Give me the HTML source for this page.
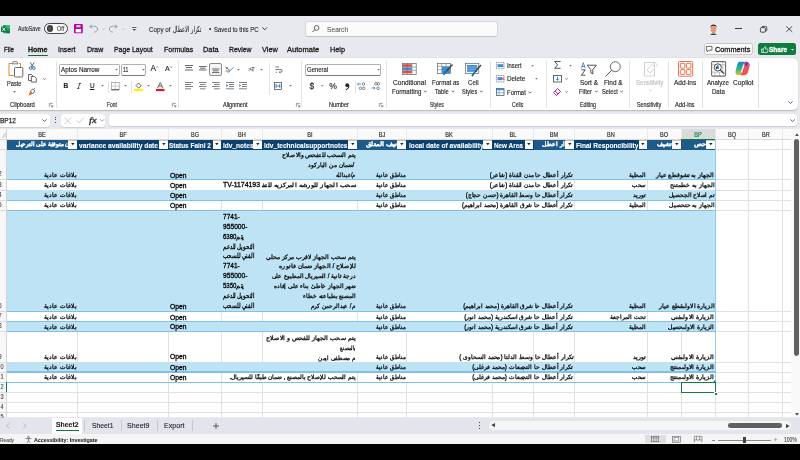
<!DOCTYPE html><html><head><meta charset="utf-8"><style>html,body{margin:0;padding:0}body{width:800px;height:460px;overflow:hidden;position:relative;background:#000;font-family:"Liberation Sans",sans-serif}#root{position:absolute;left:0;top:0;width:800px;height:460px;will-change:transform}</style></head><body><div id="root">
<div style="position:absolute;left:0.00px;top:16.00px;width:800.00px;height:428.00px;background:#e7e9ee"></div>
<svg style="position:absolute;left:1.00px;top:24.60px;overflow:visible" width="9" height="8.2" viewBox="0 0 9 8.2"><rect x="2" y="0" width="7" height="8.2" rx="0.8" fill="#21a366"/><path d="M5 0 H8.2 C8.7 0 9 0.3 9 0.8 V2.7 H5Z" fill="#33c481"/><rect x="5" y="5.5" width="4" height="2.7" fill="#107c41"/><rect x="0" y="1.4" width="5.6" height="5.6" rx="0.6" fill="#107c41"/><path d="M1.3 2.6 L4.2 5.9 M4.2 2.6 L1.3 5.9" stroke="#fff" stroke-width="0.95"/></svg>
<div style="position:absolute;left:18.00px;top:25.15px;font-size:6.80px;line-height:8.50px;color:#242424;font-weight:normal;white-space:nowrap;-webkit-text-stroke:0.1px #242424;transform:scaleX(0.7699);transform-origin:left center;">AutoSave</div>
<div style="position:absolute;left:44.40px;top:23.10px;width:23.40px;height:10.70px;border:0.9px solid #424242;border-radius:6px;box-sizing:border-box;background:#fafafa"></div>
<div style="position:absolute;left:46.80px;top:25.30px;width:6.40px;height:6.40px;background:#3d3d3d;border-radius:50%"></div>
<svg style="position:absolute;left:48.40px;top:26.90px;overflow:visible" width="3.2" height="3.2" viewBox="0 0 3.2 3.2"><circle cx="1.6" cy="1.6" r="1.1" fill="none" stroke="#8a8a8a" stroke-width="0.5"/></svg>
<div style="position:absolute;left:57.20px;top:25.02px;font-size:7.00px;line-height:8.75px;color:#333333;font-weight:normal;white-space:nowrap;-webkit-text-stroke:0.1px #333333;transform:scaleX(0.7810);transform-origin:left center;">Off</div>
<svg style="position:absolute;left:74.40px;top:23.80px;overflow:visible" width="8.8" height="9.2" viewBox="0 0 8.8 9.2"><rect x="0" y="0" width="8.8" height="9.2" rx="0.9" fill="#b4009e"/><rect x="2.2" y="1" width="4.4" height="2.4" fill="#e9b3e2"/><rect x="1.6" y="5" width="5.6" height="3.4" fill="#fff"/></svg>
<svg style="position:absolute;left:89.00px;top:24.40px;overflow:visible" width="10" height="8.5" viewBox="0 0 10 8.5"><path d="M2.6 0.6 L0.8 2.8 L3.2 4.2" fill="none" stroke="#8f8f8f" stroke-width="0.8" stroke-linejoin="round"/><path d="M1 2.8 C4 1.6 8.6 2 8.6 5 C8.6 7 7 8 5 8.2" fill="none" stroke="#8f8f8f" stroke-width="0.8"/></svg>
<svg style="position:absolute;left:101.50px;top:27.50px;overflow:visible" width="3" height="2" viewBox="0 0 3 2"><path d="M0.3 0.5 L1.5 1.6 L2.7 0.5" fill="none" stroke="#9a9a9a" stroke-width="0.6"/></svg>
<svg style="position:absolute;left:109.00px;top:24.40px;overflow:visible" width="10" height="8.5" viewBox="0 0 10 8.5"><path d="M6.4 0.6 L8.2 2.8 L5.8 4.2" fill="none" stroke="#8f8f8f" stroke-width="0.8" stroke-linejoin="round"/><path d="M8 2.8 C5 1.6 0.4 2 0.4 5 C0.4 7 2 8 4 8.2" fill="none" stroke="#8f8f8f" stroke-width="0.8"/></svg>
<svg style="position:absolute;left:121.50px;top:27.50px;overflow:visible" width="3" height="2" viewBox="0 0 3 2"><path d="M0.3 0.5 L1.5 1.6 L2.7 0.5" fill="none" stroke="#9a9a9a" stroke-width="0.6"/></svg>
<svg style="position:absolute;left:132.00px;top:26.80px;overflow:visible" width="4.5" height="4" viewBox="0 0 4.5 4"><path d="M0 0.5 H4.5" stroke="#424242" stroke-width="0.8"/><path d="M0.3 2 L2.25 3.8 L4.2 2 Z" fill="#424242"/></svg>
<div style="position:absolute;left:148.60px;top:24.61px;font-size:7.50px;line-height:9.38px;color:#242424;font-weight:normal;white-space:nowrap;-webkit-text-stroke:0.1px #242424;transform:scaleX(0.8353);transform-origin:left center;">Copy of</div>
<div dir="rtl" style="position:absolute;right:599.00px;text-align:right;top:24.61px;font-size:7.50px;line-height:9.38px;color:#242424;font-weight:normal;white-space:nowrap;-webkit-text-stroke:0.1px #242424;transform:scaleX(0.6320);transform-origin:right center;">تكرار الاعطال</div>
<div style="position:absolute;left:209.00px;top:25.24px;font-size:6.50px;line-height:8.12px;color:#242424;font-weight:normal;white-space:nowrap;-webkit-text-stroke:0.1px #242424;">&bull;</div>
<div style="position:absolute;left:214.40px;top:24.61px;font-size:7.50px;line-height:9.38px;color:#242424;font-weight:normal;white-space:nowrap;-webkit-text-stroke:0.1px #242424;transform:scaleX(0.7982);transform-origin:left center;">Saved to this PC</div>
<svg style="position:absolute;left:262.00px;top:27.30px;overflow:visible" width="5.4" height="3.4" viewBox="0 0 5.4 3.4"><path d="M0.5 0.5 L2.7 2.8 L4.9 0.5" fill="none" stroke="#242424" stroke-width="0.9"/></svg>
<div style="position:absolute;left:304.60px;top:21.20px;width:193.40px;height:15.80px;background:#fafafa;border:0.6px solid #d6d8dc;border-bottom-color:#c2c4c8;border-radius:3px;box-sizing:border-box"></div>
<svg style="position:absolute;left:312.00px;top:24.80px;overflow:visible" width="7.5" height="7.5" viewBox="0 0 7.5 7.5"><circle cx="4.6" cy="2.9" r="2.4" fill="none" stroke="#424242" stroke-width="0.8"/><path d="M2.9 4.6 L0.5 7" stroke="#424242" stroke-width="0.9"/></svg>
<div style="position:absolute;left:326.60px;top:24.60px;font-size:7.20px;line-height:9.00px;color:#616161;font-weight:normal;white-space:nowrap;-webkit-text-stroke:0.1px #616161;transform:scaleX(0.9262);transform-origin:left center;">Search</div>
<svg style="position:absolute;left:707.00px;top:22.00px;overflow:visible" width="13" height="13.3" viewBox="0 0 13 13.3"><defs><clipPath id="avc"><circle cx="6.5" cy="6.6" r="6.5"/></clipPath></defs><circle cx="6.5" cy="6.6" r="6.5" fill="#ececec"/><g clip-path="url(#avc)"><ellipse cx="6.5" cy="7" rx="2.9" ry="3.6" fill="#e29a82"/><path d="M3.2 6 C2.8 1.6 10.2 1.4 9.8 6 L9.2 4.6 C8 3.4 5 3.4 3.8 4.6 Z" fill="#262626"/><path d="M2.2 14 C2.8 10.8 10.2 10.8 10.8 14 Z" fill="#2f3b3a"/><path d="M5.3 10 H7.7 V11.3 H5.3Z" fill="#d38a73"/></g></svg>
<div style="position:absolute;left:735.40px;top:28.10px;width:6.60px;height:0.70px;background:#3a3a3a"></div>
<svg style="position:absolute;left:760.00px;top:25.60px;overflow:visible" width="7.2" height="6.5" viewBox="0 0 7.2 6.5"><rect x="0.4" y="1.6" width="5" height="4.6" rx="1" fill="none" stroke="#242424" stroke-width="0.8"/><path d="M1.8 1.4 C1.8 0.6 2.2 0.4 3 0.4 H5.6 C6.4 0.4 6.8 0.8 6.8 1.6 V4.2 C6.8 4.8 6.4 5.2 5.8 5.2" fill="none" stroke="#242424" stroke-width="0.8"/></svg>
<svg style="position:absolute;left:786.00px;top:25.60px;overflow:visible" width="6.5" height="6.2" viewBox="0 0 6.5 6.2"><path d="M0.3 0.3 L6.2 5.9 M6.2 0.3 L0.3 5.9" stroke="#242424" stroke-width="0.8"/></svg>
<div style="position:absolute;left:3.75px;top:44.66px;font-size:7.90px;line-height:9.88px;color:#1a1a1a;font-weight:normal;white-space:nowrap;-webkit-text-stroke:0.3px #1a1a1a;transform:scaleX(0.7862);transform-origin:left center;">File</div>
<div style="position:absolute;left:28.00px;top:44.66px;font-size:7.90px;line-height:9.88px;color:#1a1a1a;font-weight:bold;white-space:nowrap;-webkit-text-stroke:0.3px #1a1a1a;transform:scaleX(0.8889);transform-origin:left center;">Home</div>
<div style="position:absolute;left:58.00px;top:44.66px;font-size:7.90px;line-height:9.88px;color:#1a1a1a;font-weight:normal;white-space:nowrap;-webkit-text-stroke:0.3px #1a1a1a;transform:scaleX(0.8868);transform-origin:left center;">Insert</div>
<div style="position:absolute;left:86.75px;top:44.66px;font-size:7.90px;line-height:9.88px;color:#1a1a1a;font-weight:normal;white-space:nowrap;-webkit-text-stroke:0.3px #1a1a1a;transform:scaleX(0.8821);transform-origin:left center;">Draw</div>
<div style="position:absolute;left:113.75px;top:44.66px;font-size:7.90px;line-height:9.88px;color:#1a1a1a;font-weight:normal;white-space:nowrap;-webkit-text-stroke:0.3px #1a1a1a;transform:scaleX(0.8745);transform-origin:left center;">Page Layout</div>
<div style="position:absolute;left:163.75px;top:44.66px;font-size:7.90px;line-height:9.88px;color:#1a1a1a;font-weight:normal;white-space:nowrap;-webkit-text-stroke:0.3px #1a1a1a;transform:scaleX(0.8893);transform-origin:left center;">Formulas</div>
<div style="position:absolute;left:202.50px;top:44.66px;font-size:7.90px;line-height:9.88px;color:#1a1a1a;font-weight:normal;white-space:nowrap;-webkit-text-stroke:0.3px #1a1a1a;transform:scaleX(0.9297);transform-origin:left center;">Data</div>
<div style="position:absolute;left:228.75px;top:44.66px;font-size:7.90px;line-height:9.88px;color:#1a1a1a;font-weight:normal;white-space:nowrap;-webkit-text-stroke:0.3px #1a1a1a;transform:scaleX(0.8696);transform-origin:left center;">Review</div>
<div style="position:absolute;left:261.75px;top:44.66px;font-size:7.90px;line-height:9.88px;color:#1a1a1a;font-weight:normal;white-space:nowrap;-webkit-text-stroke:0.3px #1a1a1a;transform:scaleX(0.9282);transform-origin:left center;">View</div>
<div style="position:absolute;left:287.00px;top:44.66px;font-size:7.90px;line-height:9.88px;color:#1a1a1a;font-weight:normal;white-space:nowrap;-webkit-text-stroke:0.3px #1a1a1a;transform:scaleX(0.9547);transform-origin:left center;">Automate</div>
<div style="position:absolute;left:329.50px;top:44.66px;font-size:7.90px;line-height:9.88px;color:#1a1a1a;font-weight:normal;white-space:nowrap;-webkit-text-stroke:0.3px #1a1a1a;transform:scaleX(0.9240);transform-origin:left center;">Help</div>
<div style="position:absolute;left:28.00px;top:54.90px;width:19.60px;height:1.00px;background:#0e6b38;border-radius:0.5px"></div>
<div style="position:absolute;left:704.40px;top:42.90px;width:48.90px;height:12.40px;background:#fbfbfb;border:0.6px solid #c8c8c8;border-radius:2.5px;box-sizing:border-box"></div>
<svg style="position:absolute;left:706.20px;top:45.90px;overflow:visible" width="6.5" height="6.2" viewBox="0 0 6.5 6.2"><path d="M0.4 0.4 H6 V4.2 H2.8 L1.2 5.8 V4.2 H0.4 Z" fill="none" stroke="#242424" stroke-width="0.65" stroke-linejoin="round"/></svg>
<div style="position:absolute;left:714.80px;top:45.20px;font-size:7.20px;line-height:9.00px;color:#1a1a1a;font-weight:normal;white-space:nowrap;-webkit-text-stroke:0.3px #1a1a1a;transform:scaleX(1.0158);transform-origin:left center;">Comments</div>
<div style="position:absolute;left:758.00px;top:43.00px;width:38.00px;height:12.30px;background:#0f7b3f;border-radius:2.5px"></div>
<svg style="position:absolute;left:760.50px;top:45.60px;overflow:visible" width="7.5" height="7.5" viewBox="0 0 7.5 7.5"><path d="M0.6 6.5 V3 H2.2 V6.5 Z M2.2 3.2 L4 0.6 C4.6 0.5 5 1 4.8 1.8 L4.4 3 H6.4 C7 3 7.2 3.5 7 4 L6.3 6.5 H2.2" fill="none" stroke="#fff" stroke-width="0.7"/></svg>
<div style="position:absolute;left:769.10px;top:45.14px;font-size:7.30px;line-height:9.12px;color:#ffffff;font-weight:bold;white-space:nowrap;-webkit-text-stroke:0.3px #ffffff;transform:scaleX(0.8875);transform-origin:left center;">Share</div>
<svg style="position:absolute;left:791.00px;top:48.50px;overflow:visible" width="3" height="2" viewBox="0 0 3 2"><path d="M0 0 L1.5 1.6 L3 0Z" fill="#fff"/></svg>
<div style="position:absolute;left:0.00px;top:58.00px;width:797.80px;height:51.60px;background:#ffffff;border-radius:0 5px 5px 0;box-shadow:0 0.6px 1.2px rgba(0,0,0,0.22)"></div>
<div style="position:absolute;left:55.50px;top:61.00px;width:0.60px;height:46.50px;background:#e1e1e1"></div>
<div style="position:absolute;left:178.20px;top:61.00px;width:0.60px;height:46.50px;background:#e1e1e1"></div>
<div style="position:absolute;left:301.40px;top:61.00px;width:0.60px;height:46.50px;background:#e1e1e1"></div>
<div style="position:absolute;left:385.50px;top:61.00px;width:0.60px;height:46.50px;background:#e1e1e1"></div>
<div style="position:absolute;left:489.70px;top:61.00px;width:0.60px;height:46.50px;background:#e1e1e1"></div>
<div style="position:absolute;left:546.20px;top:61.00px;width:0.60px;height:46.50px;background:#e1e1e1"></div>
<div style="position:absolute;left:629.30px;top:61.00px;width:0.60px;height:46.50px;background:#e1e1e1"></div>
<div style="position:absolute;left:668.40px;top:61.00px;width:0.60px;height:46.50px;background:#e1e1e1"></div>
<div style="position:absolute;left:701.50px;top:61.00px;width:0.60px;height:46.50px;background:#e1e1e1"></div>
<div style="position:absolute;left:758.40px;top:61.00px;width:0.60px;height:46.50px;background:#e1e1e1"></div>
<div style="position:absolute;left:10.20px;top:100.80px;font-size:6.40px;line-height:8.00px;color:#242424;font-weight:normal;white-space:nowrap;-webkit-text-stroke:0.14px #242424;transform:scaleX(0.9065);transform-origin:left center;">Clipboard</div>
<div style="position:absolute;left:107.20px;top:100.80px;font-size:6.40px;line-height:8.00px;color:#242424;font-weight:normal;white-space:nowrap;-webkit-text-stroke:0.14px #242424;transform:scaleX(0.7658);transform-origin:left center;">Font</div>
<div style="position:absolute;left:223.00px;top:100.80px;font-size:6.40px;line-height:8.00px;color:#242424;font-weight:normal;white-space:nowrap;-webkit-text-stroke:0.14px #242424;transform:scaleX(0.8620);transform-origin:left center;">Alignment</div>
<div style="position:absolute;left:329.00px;top:100.80px;font-size:6.40px;line-height:8.00px;color:#242424;font-weight:normal;white-space:nowrap;-webkit-text-stroke:0.14px #242424;transform:scaleX(0.8753);transform-origin:left center;">Number</div>
<div style="position:absolute;left:430.30px;top:100.80px;font-size:6.40px;line-height:8.00px;color:#242424;font-weight:normal;white-space:nowrap;-webkit-text-stroke:0.14px #242424;transform:scaleX(0.7871);transform-origin:left center;">Styles</div>
<div style="position:absolute;left:512.00px;top:100.80px;font-size:6.40px;line-height:8.00px;color:#242424;font-weight:normal;white-space:nowrap;-webkit-text-stroke:0.14px #242424;transform:scaleX(0.7877);transform-origin:left center;">Cells</div>
<div style="position:absolute;left:579.90px;top:100.80px;font-size:6.40px;line-height:8.00px;color:#242424;font-weight:normal;white-space:nowrap;-webkit-text-stroke:0.14px #242424;transform:scaleX(0.8185);transform-origin:left center;">Editing</div>
<div style="position:absolute;left:637.00px;top:100.80px;font-size:6.40px;line-height:8.00px;color:#242424;font-weight:normal;white-space:nowrap;-webkit-text-stroke:0.14px #242424;transform:scaleX(0.8408);transform-origin:left center;">Sensitivity</div>
<div style="position:absolute;left:674.90px;top:100.80px;font-size:6.40px;line-height:8.00px;color:#242424;font-weight:normal;white-space:nowrap;-webkit-text-stroke:0.14px #242424;transform:scaleX(0.8998);transform-origin:left center;">Add-ins</div>
<svg style="position:absolute;left:49.00px;top:102.60px;overflow:visible" width="4.2" height="4.2" viewBox="0 0 4.2 4.2"><path d="M0.4 3.8 V0.4 H3.8" fill="none" stroke="#616161" stroke-width="0.6"/><path d="M1.5 1.5 L3.8 3.8 M3.8 2 V3.8 H2" fill="none" stroke="#616161" stroke-width="0.6"/></svg>
<svg style="position:absolute;left:171.80px;top:102.60px;overflow:visible" width="4.2" height="4.2" viewBox="0 0 4.2 4.2"><path d="M0.4 3.8 V0.4 H3.8" fill="none" stroke="#616161" stroke-width="0.6"/><path d="M1.5 1.5 L3.8 3.8 M3.8 2 V3.8 H2" fill="none" stroke="#616161" stroke-width="0.6"/></svg>
<svg style="position:absolute;left:295.50px;top:102.60px;overflow:visible" width="4.2" height="4.2" viewBox="0 0 4.2 4.2"><path d="M0.4 3.8 V0.4 H3.8" fill="none" stroke="#616161" stroke-width="0.6"/><path d="M1.5 1.5 L3.8 3.8 M3.8 2 V3.8 H2" fill="none" stroke="#616161" stroke-width="0.6"/></svg>
<svg style="position:absolute;left:378.90px;top:102.60px;overflow:visible" width="4.2" height="4.2" viewBox="0 0 4.2 4.2"><path d="M0.4 3.8 V0.4 H3.8" fill="none" stroke="#616161" stroke-width="0.6"/><path d="M1.5 1.5 L3.8 3.8 M3.8 2 V3.8 H2" fill="none" stroke="#616161" stroke-width="0.6"/></svg>
<svg style="position:absolute;left:7.80px;top:61.20px;overflow:visible" width="15.5" height="16.5" viewBox="0 0 15.5 16.5"><path d="M1 2.5 H4 M11 2.5 H12.5 V6.5" fill="none" stroke="#e8891c" stroke-width="1"/><path d="M1 2.5 V14.5 H5.5" fill="none" stroke="#e8891c" stroke-width="1"/><path d="M4 2.8 L5.2 0.6 H8.8 L10 2.8 Z" fill="none" stroke="#616161" stroke-width="0.8"/><rect x="6.5" y="6.5" width="8.3" height="9.5" rx="1" fill="#fff" stroke="#424242" stroke-width="0.8"/></svg>
<div style="position:absolute;left:6.50px;top:79.92px;font-size:7.00px;line-height:8.75px;color:#1f1f1f;font-weight:normal;white-space:nowrap;-webkit-text-stroke:0.14px #1f1f1f;transform:scaleX(0.8042);transform-origin:left center;">Paste</div>
<svg style="position:absolute;left:12.50px;top:90.50px;overflow:visible" width="3" height="2" viewBox="0 0 3 2"><path d="M0.2 0.3 L1.5 1.7 L2.8 0.3Z" fill="#424242"/></svg>
<svg style="position:absolute;left:28.70px;top:61.80px;overflow:visible" width="6.5" height="8" viewBox="0 0 6.5 8"><path d="M1.2 0.3 L4.2 5 M5.3 0.3 L2.3 5" stroke="#424242" stroke-width="0.8"/><circle cx="1.7" cy="6.2" r="1.3" fill="none" stroke="#0f6cbd" stroke-width="0.9"/><circle cx="4.8" cy="6.2" r="1.3" fill="none" stroke="#0f6cbd" stroke-width="0.9"/></svg>
<svg style="position:absolute;left:27.80px;top:74.30px;overflow:visible" width="9" height="8.5" viewBox="0 0 9 8.5"><path d="M0.5 0.5 H3.5 L4.5 1.5 V6.5 H0.5 Z" fill="#fff" stroke="#424242" stroke-width="0.8"/><path d="M3.3 2.5 H6.5 L8.3 4.3 V8.1 H3.3 Z" fill="#fff" stroke="#424242" stroke-width="0.8"/></svg>
<svg style="position:absolute;left:43.00px;top:78.20px;overflow:visible" width="3" height="2" viewBox="0 0 3 2"><path d="M0.3 0.3 L1.5 1.6 L2.7 0.3" fill="none" stroke="#424242" stroke-width="0.7"/></svg>
<svg style="position:absolute;left:28.40px;top:88.00px;overflow:visible" width="7.5" height="8" viewBox="0 0 7.5 8"><path d="M0.6 7.4 L2 3.5 L4.5 6 Z" fill="#f7630c"/><path d="M2.3 3.2 L4.8 5.7 L7 3 L4.8 1 Z" fill="none" stroke="#424242" stroke-width="0.8"/><path d="M5.5 1.5 L6.8 0.3" stroke="#424242" stroke-width="0.8"/></svg>
<div style="position:absolute;left:59.20px;top:63.60px;width:60.40px;height:12.00px;border:0.6px solid #b0b0b0;border-bottom-color:#7a7a7a;border-radius:2px;box-sizing:border-box;background:#fff"></div>
<div style="position:absolute;left:61.20px;top:66.12px;font-size:7.00px;line-height:8.75px;color:#1f1f1f;font-weight:normal;white-space:nowrap;-webkit-text-stroke:0.14px #1f1f1f;transform:scaleX(0.9055);transform-origin:left center;">Aptos Narrow</div>
<div style="position:absolute;left:120.90px;top:63.60px;width:25.40px;height:12.00px;border:0.6px solid #b0b0b0;border-bottom-color:#7a7a7a;border-radius:2px;box-sizing:border-box;background:#fff"></div>
<div style="position:absolute;left:122.80px;top:66.12px;font-size:7.00px;line-height:8.75px;color:#1f1f1f;font-weight:normal;white-space:nowrap;-webkit-text-stroke:0.14px #1f1f1f;transform:scaleX(0.7142);transform-origin:left center;">11</div>
<svg style="position:absolute;left:115.20px;top:68.60px;overflow:visible" width="3" height="2" viewBox="0 0 3 2"><path d="M0.2 0.2 L1.5 1.6 L2.8 0.2Z" fill="#424242"/></svg>
<svg style="position:absolute;left:141.80px;top:68.60px;overflow:visible" width="3" height="2" viewBox="0 0 3 2"><path d="M0.2 0.2 L1.5 1.6 L2.8 0.2Z" fill="#424242"/></svg>
<div style="position:absolute;left:150.50px;top:64.08px;font-size:8.20px;line-height:10.25px;color:#242424;font-weight:normal;white-space:nowrap;-webkit-text-stroke:0.14px #242424;">A</div>
<svg style="position:absolute;left:155.80px;top:65.80px;overflow:visible" width="2.5" height="2" viewBox="0 0 2.5 2"><path d="M0.2 1.6 L1.2 0.4 L2.2 1.6" fill="none" stroke="#0f6cbd" stroke-width="0.6"/></svg>
<div style="position:absolute;left:165.00px;top:65.42px;font-size:7.00px;line-height:8.75px;color:#242424;font-weight:normal;white-space:nowrap;-webkit-text-stroke:0.14px #242424;">A</div>
<svg style="position:absolute;left:169.60px;top:66.40px;overflow:visible" width="2.5" height="2" viewBox="0 0 2.5 2"><path d="M0.2 0.4 L1.2 1.6 L2.2 0.4" fill="none" stroke="#0f6cbd" stroke-width="0.6"/></svg>
<div style="position:absolute;left:63.60px;top:82.08px;font-size:6.60px;line-height:8.25px;color:#242424;font-weight:bold;white-space:nowrap;-webkit-text-stroke:0.14px #242424;">B</div>
<svg style="position:absolute;left:77.30px;top:83.00px;overflow:visible" width="4" height="5.8" viewBox="0 0 4 5.8"><path d="M1.6 0.4 H4 M0 5.4 H2.4 M2.8 0.4 L1.2 5.4" fill="none" stroke="#242424" stroke-width="0.75"/></svg>
<div style="position:absolute;left:89.90px;top:81.90px;font-size:6.40px;line-height:8.00px;color:#242424;font-weight:normal;white-space:nowrap;-webkit-text-stroke:0.14px #242424;text-decoration:underline">U</div>
<svg style="position:absolute;left:100.80px;top:85.40px;overflow:visible" width="3" height="2" viewBox="0 0 3 2"><path d="M0.2 0.2 L1.5 1.6 L2.8 0.2Z" fill="#424242"/></svg>
<div style="position:absolute;left:108.20px;top:81.00px;width:0.60px;height:11.50px;background:#e1e1e1"></div>
<svg style="position:absolute;left:111.00px;top:82.00px;overflow:visible" width="8.6" height="8.2" viewBox="0 0 8.6 8.2"><rect x="0.4" y="0.4" width="7.8" height="7.4" fill="none" stroke="#9a9a9a" stroke-width="0.7"/><path d="M4.3 0.4 V7.8 M0.4 4.1 H8.2" stroke="#9a9a9a" stroke-width="0.5"/><path d="M0.4 7.8 H8.2" stroke="#424242" stroke-width="0.9"/></svg>
<svg style="position:absolute;left:124.30px;top:85.40px;overflow:visible" width="3" height="2" viewBox="0 0 3 2"><path d="M0.2 0.2 L1.5 1.6 L2.8 0.2Z" fill="#424242"/></svg>
<div style="position:absolute;left:130.60px;top:81.00px;width:0.60px;height:11.50px;background:#e1e1e1"></div>
<svg style="position:absolute;left:134.00px;top:81.60px;overflow:visible" width="9" height="9.2" viewBox="0 0 9 9.2"><path d="M2 3.5 L4.5 1 L7.2 3.7 L4.7 6.2 Z" fill="none" stroke="#424242" stroke-width="0.8"/><rect x="0" y="6.9" width="9" height="2.2" fill="#fff100"/></svg>
<svg style="position:absolute;left:147.00px;top:85.40px;overflow:visible" width="3" height="2" viewBox="0 0 3 2"><path d="M0.2 0.2 L1.5 1.6 L2.8 0.2Z" fill="#424242"/></svg>
<svg style="position:absolute;left:155.50px;top:81.60px;overflow:visible" width="8.5" height="9.2" viewBox="0 0 8.5 9.2"><path d="M1.5 6 L4.25 0.6 L7 6 M2.5 4 H6" fill="none" stroke="#424242" stroke-width="0.8"/><rect x="0" y="6.9" width="8.5" height="2.2" fill="#e81123"/></svg>
<svg style="position:absolute;left:168.50px;top:85.40px;overflow:visible" width="3" height="2" viewBox="0 0 3 2"><path d="M0.2 0.2 L1.5 1.6 L2.8 0.2Z" fill="#424242"/></svg>
<svg style="position:absolute;left:184.90px;top:65.00px;overflow:visible" width="8" height="8" viewBox="0 0 8 8"><path d="M0 0.5 H8" stroke="#424242" stroke-width="0.8"/><path d="M1 2.5 H7" stroke="#424242" stroke-width="0.8"/><path d="M0 5 H8" stroke="#424242" stroke-width="0.8"/></svg>
<svg style="position:absolute;left:198.80px;top:65.00px;overflow:visible" width="7.5" height="8" viewBox="0 0 7.5 8"><path d="M0 1.5 H7.5" stroke="#424242" stroke-width="0.8"/><path d="M1 3.2 H6.5" stroke="#424242" stroke-width="0.8"/><path d="M0 5 H7.5" stroke="#424242" stroke-width="0.8"/></svg>
<div style="position:absolute;left:209.30px;top:63.20px;width:12.70px;height:12.40px;border:0.7px solid #8a8a8a;border-radius:2px;box-sizing:border-box;background:#f5f5f5"></div>
<svg style="position:absolute;left:212.00px;top:65.50px;overflow:visible" width="7.5" height="8" viewBox="0 0 7.5 8"><path d="M0 3 H7.5" stroke="#424242" stroke-width="0.8"/><path d="M1 4.8 H6.5" stroke="#424242" stroke-width="0.8"/><path d="M0 6.6 H7.5" stroke="#424242" stroke-width="0.8"/></svg>
<svg style="position:absolute;left:225.00px;top:65.50px;overflow:visible" width="9" height="7.5" viewBox="0 0 9 7.5"><path d="M0.5 1 L5 4.5 M1 3 L3 1.5 M0.5 5 H4" stroke="#424242" stroke-width="0.7"/><path d="M3 6.8 L8.3 1.5" stroke="#0f6cbd" stroke-width="0.8"/></svg>
<svg style="position:absolute;left:237.40px;top:68.60px;overflow:visible" width="3" height="2" viewBox="0 0 3 2"><path d="M0.2 0.2 L1.5 1.6 L2.8 0.2Z" fill="#424242"/></svg>
<svg style="position:absolute;left:247.80px;top:66.50px;overflow:visible" width="7" height="5" viewBox="0 0 7 5"><path d="M0.5 1 L2 2.5 L0.5 4" fill="none" stroke="#0f6cbd" stroke-width="0.8"/><path d="M4 0.5 H6.5 M5 0.5 V4.5 M3.5 0.5 C2 0.5 2 3 3.5 3 H5" fill="none" stroke="#424242" stroke-width="0.7"/></svg>
<svg style="position:absolute;left:260.20px;top:68.60px;overflow:visible" width="3" height="2" viewBox="0 0 3 2"><path d="M0.2 0.2 L1.5 1.6 L2.8 0.2Z" fill="#424242"/></svg>
<svg style="position:absolute;left:184.90px;top:81.80px;overflow:visible" width="8" height="8" viewBox="0 0 8 8"><path d="M0 0.5 H8" stroke="#616161" stroke-width="0.8"/><path d="M0 2.5 H6" stroke="#616161" stroke-width="0.8"/><path d="M0 4.5 H8" stroke="#616161" stroke-width="0.8"/><path d="M0 6.8 H6" stroke="#616161" stroke-width="0.8"/></svg>
<svg style="position:absolute;left:198.80px;top:81.80px;overflow:visible" width="7.5" height="8" viewBox="0 0 7.5 8"><path d="M0 0.5 H7.5" stroke="#616161" stroke-width="0.8"/><path d="M1 2.5 H6.5" stroke="#616161" stroke-width="0.8"/><path d="M0 4.5 H7.5" stroke="#616161" stroke-width="0.8"/><path d="M1 6.8 H6.5" stroke="#616161" stroke-width="0.8"/></svg>
<svg style="position:absolute;left:212.00px;top:81.80px;overflow:visible" width="7.7" height="8" viewBox="0 0 7.7 8"><path d="M0 0.5 H7.7" stroke="#616161" stroke-width="0.8"/><path d="M2 2.5 H7.7" stroke="#616161" stroke-width="0.8"/><path d="M0 4.5 H7.7" stroke="#616161" stroke-width="0.8"/><path d="M2 6.8 H7.7" stroke="#616161" stroke-width="0.8"/></svg>
<svg style="position:absolute;left:225.60px;top:81.80px;overflow:visible" width="8" height="8" viewBox="0 0 8 8"><path d="M0 0.5 H8 M3 2.5 H8 M3 4.5 H8 M0 6.8 H8" stroke="#616161" stroke-width="0.8"/><path d="M2.2 3.5 L0.3 2.3 V4.7Z" fill="#0f6cbd"/></svg>
<svg style="position:absolute;left:239.00px;top:81.80px;overflow:visible" width="8" height="8" viewBox="0 0 8 8"><path d="M0 0.5 H8 M3 2.5 H8 M3 4.5 H8 M0 6.8 H8" stroke="#616161" stroke-width="0.8"/><path d="M0.3 2.3 L2.2 3.5 L0.3 4.7Z" fill="#0f6cbd"/></svg>
<div style="position:absolute;left:268.50px;top:62.50px;width:0.60px;height:32.50px;background:#e1e1e1"></div>
<svg style="position:absolute;left:275.00px;top:66.20px;overflow:visible" width="8" height="7" viewBox="0 0 8 7"><path d="M0.5 1 H4 M0.5 3.5 H6 C7.5 3.5 7.5 6.2 6 6.2 H4.5 M0.5 6.2 H2" fill="none" stroke="#424242" stroke-width="0.7"/><path d="M5.3 5.2 L4.2 6.2 L5.3 7.2" fill="none" stroke="#0f6cbd" stroke-width="0.7"/></svg>
<svg style="position:absolute;left:274.20px;top:81.80px;overflow:visible" width="7.8" height="8" viewBox="0 0 7.8 8"><rect x="0.4" y="0.4" width="7" height="7.2" fill="none" stroke="#424242" stroke-width="0.7"/><path d="M2 2 V6 M5.8 2 V6" stroke="#0f6cbd" stroke-width="0.8"/><path d="M1.8 4 H6" stroke="#0f6cbd" stroke-width="0.8"/></svg>
<svg style="position:absolute;left:289.00px;top:85.40px;overflow:visible" width="3" height="2" viewBox="0 0 3 2"><path d="M0.2 0.2 L1.5 1.6 L2.8 0.2Z" fill="#424242"/></svg>
<div style="position:absolute;left:305.20px;top:63.60px;width:76.30px;height:12.00px;border:0.6px solid #b0b0b0;border-bottom-color:#7a7a7a;border-radius:2px;box-sizing:border-box;background:#fff"></div>
<div style="position:absolute;left:306.80px;top:66.12px;font-size:7.00px;line-height:8.75px;color:#1f1f1f;font-weight:normal;white-space:nowrap;-webkit-text-stroke:0.14px #1f1f1f;transform:scaleX(0.8512);transform-origin:left center;">General</div>
<svg style="position:absolute;left:376.70px;top:68.60px;overflow:visible" width="3" height="2" viewBox="0 0 3 2"><path d="M0.2 0.2 L1.5 1.6 L2.8 0.2Z" fill="#424242"/></svg>
<div style="position:absolute;left:309.40px;top:81.35px;font-size:8.40px;line-height:10.50px;color:#242424;font-weight:normal;white-space:nowrap;-webkit-text-stroke:0.14px #242424;">$</div>
<svg style="position:absolute;left:321.00px;top:85.40px;overflow:visible" width="2.5" height="2" viewBox="0 0 2.5 2"><path d="M0.2 0.2 L1.25 1.4 L2.3 0.2Z" fill="#424242"/></svg>
<div style="position:absolute;left:329.30px;top:80.62px;font-size:8.60px;line-height:10.75px;color:#242424;font-weight:normal;white-space:nowrap;-webkit-text-stroke:0.14px #242424;">%</div>
<svg style="position:absolute;left:345.30px;top:82.80px;overflow:visible" width="4.5" height="7" viewBox="0 0 4.5 7"><circle cx="2.2" cy="2.2" r="1.9" fill="#242424"/><path d="M3.9 2.4 C4 4.5 2.8 6 0.8 6.8" fill="none" stroke="#242424" stroke-width="1.1"/></svg>
<div style="position:absolute;left:354.60px;top:81.00px;width:0.60px;height:11.50px;background:#e1e1e1"></div>
<svg style="position:absolute;left:357.40px;top:81.80px;overflow:visible" width="8.5" height="8" viewBox="0 0 8.5 8"><path d="M0.5 2 H4 M1.8 0.8 L0.5 2 L1.8 3.2" fill="none" stroke="#0f6cbd" stroke-width="0.7"/><circle cx="6.5" cy="2" r="1.3" fill="none" stroke="#424242" stroke-width="0.6"/><circle cx="3.5" cy="6.3" r="1.3" fill="none" stroke="#424242" stroke-width="0.6"/><circle cx="6.8" cy="6.3" r="1.3" fill="none" stroke="#424242" stroke-width="0.6"/></svg>
<svg style="position:absolute;left:371.00px;top:81.80px;overflow:visible" width="8.5" height="8" viewBox="0 0 8.5 8"><path d="M0.5 6 H4 M2.7 4.8 L4 6 L2.7 7.2" fill="none" stroke="#0f6cbd" stroke-width="0.7"/><circle cx="5" cy="1.8" r="1.3" fill="none" stroke="#424242" stroke-width="0.6"/><circle cx="7.5" cy="1.8" r="1.3" fill="none" stroke="#424242" stroke-width="0.6"/><circle cx="7" cy="6.3" r="1.3" fill="none" stroke="#424242" stroke-width="0.6"/></svg>
<svg style="position:absolute;left:402.00px;top:63.20px;overflow:visible" width="14.6" height="11.8" viewBox="0 0 14.6 11.8"><rect x="0.4" y="0.4" width="13.8" height="11" fill="#fff" stroke="#616161" stroke-width="0.7"/><rect x="0.8" y="1.2" width="9" height="2.6" fill="#e8484a"/><rect x="0.8" y="4.5" width="9" height="2.6" fill="#3b8ed8"/><rect x="0.8" y="7.8" width="9" height="2.6" fill="#e8484a"/><path d="M0.4 4.1 H14.2 M0.4 7.4 H14.2 M5 0.4 V11.4 M10 0.4 V11.4" stroke="#616161" stroke-width="0.5"/></svg>
<div style="position:absolute;left:393.10px;top:78.83px;font-size:7.00px;line-height:8.75px;color:#1f1f1f;font-weight:normal;white-space:nowrap;-webkit-text-stroke:0.14px #1f1f1f;transform:scaleX(0.9392);transform-origin:left center;">Conditional</div>
<div style="position:absolute;left:391.60px;top:88.12px;font-size:7.00px;line-height:8.75px;color:#1f1f1f;font-weight:normal;white-space:nowrap;-webkit-text-stroke:0.14px #1f1f1f;transform:scaleX(0.8761);transform-origin:left center;">Formatting <svg width='4' height='3' style='vertical-align:1px;margin-left:1px' viewBox='0 0 4 3'><path d='M0.4 0.6 L2 2.2 L3.6 0.6' fill='none' stroke='#424242' stroke-width='0.8'/></svg></div>
<svg style="position:absolute;left:436.80px;top:63.20px;overflow:visible" width="16.5" height="12.5" viewBox="0 0 16.5 12.5"><rect x="0.4" y="0.4" width="13" height="10" fill="#fff" stroke="#616161" stroke-width="0.7"/><path d="M0.4 3.3 H13.4 M0.4 6.6 H13.4 M4.7 0.4 V10.4 M9 0.4 V10.4" stroke="#616161" stroke-width="0.5"/><rect x="5" y="3.6" width="8" height="6.5" fill="#3b8ed8"/><path d="M15.5 1.5 L9 8.5" stroke="#424242" stroke-width="1.4"/><path d="M9 8.5 L6.6 11.8 L8.2 9" stroke="#0f6cbd" stroke-width="1.6"/></svg>
<div style="position:absolute;left:431.60px;top:78.83px;font-size:7.00px;line-height:8.75px;color:#1f1f1f;font-weight:normal;white-space:nowrap;-webkit-text-stroke:0.14px #1f1f1f;transform:scaleX(0.8694);transform-origin:left center;">Format as</div>
<div style="position:absolute;left:435.00px;top:88.12px;font-size:7.00px;line-height:8.75px;color:#1f1f1f;font-weight:normal;white-space:nowrap;-webkit-text-stroke:0.14px #1f1f1f;transform:scaleX(0.8190);transform-origin:left center;">Table <svg width='4' height='3' style='vertical-align:1px;margin-left:1px' viewBox='0 0 4 3'><path d='M0.4 0.6 L2 2.2 L3.6 0.6' fill='none' stroke='#424242' stroke-width='0.8'/></svg></div>
<svg style="position:absolute;left:465.20px;top:63.20px;overflow:visible" width="16.5" height="13.7" viewBox="0 0 16.5 13.7"><rect x="0.4" y="0.4" width="13.4" height="10" fill="#fff" stroke="#616161" stroke-width="0.7"/><rect x="2" y="2" width="10.3" height="6.8" fill="#3b8ed8"/><path d="M2 4.2 H12.3 M2 6.4 H12.3" stroke="#9fcbf0" stroke-width="0.6"/><path d="M16 2 L10 9" stroke="#424242" stroke-width="1.4"/><path d="M10 9 L7 13.2 L9 9.8" stroke="#0f6cbd" stroke-width="1.6"/></svg>
<div style="position:absolute;left:467.80px;top:78.83px;font-size:7.00px;line-height:8.75px;color:#1f1f1f;font-weight:normal;white-space:nowrap;-webkit-text-stroke:0.14px #1f1f1f;transform:scaleX(0.8705);transform-origin:left center;">Cell</div>
<div style="position:absolute;left:462.30px;top:88.12px;font-size:7.00px;line-height:8.75px;color:#1f1f1f;font-weight:normal;white-space:nowrap;-webkit-text-stroke:0.14px #1f1f1f;transform:scaleX(0.8034);transform-origin:left center;">Styles <svg width='4' height='3' style='vertical-align:1px;margin-left:1px' viewBox='0 0 4 3'><path d='M0.4 0.6 L2 2.2 L3.6 0.6' fill='none' stroke='#424242' stroke-width='0.8'/></svg></div>
<svg style="position:absolute;left:495.90px;top:61.90px;overflow:visible" width="8.5" height="7.2" viewBox="0 0 8.5 7.2"><rect x="0.4" y="0.4" width="7.6" height="6.4" fill="none" stroke="#424242" stroke-width="0.6" stroke-dasharray="1 0.6"/><rect x="1.5" y="2.2" width="5.8" height="3" fill="#3b8ed8"/></svg>
<div style="position:absolute;left:506.70px;top:61.53px;font-size:7.00px;line-height:8.75px;color:#1f1f1f;font-weight:normal;white-space:nowrap;-webkit-text-stroke:0.14px #1f1f1f;transform:scaleX(0.8335);transform-origin:left center;">Insert</div>
<svg style="position:absolute;left:531.00px;top:64.50px;overflow:visible" width="3" height="2" viewBox="0 0 3 2"><path d="M0.2 0.2 L1.5 1.6 L2.8 0.2Z" fill="#424242"/></svg>
<svg style="position:absolute;left:495.90px;top:75.30px;overflow:visible" width="8.5" height="7.4" viewBox="0 0 8.5 7.4"><rect x="0.4" y="0.4" width="7.6" height="6.6" fill="none" stroke="#424242" stroke-width="0.6" stroke-dasharray="1 0.6"/><rect x="1.5" y="2.2" width="4.5" height="3" fill="#3b8ed8"/><path d="M5.8 2.5 L8 4.8 M8 2.5 L5.8 4.8" stroke="#e81123" stroke-width="0.8"/></svg>
<div style="position:absolute;left:506.70px;top:75.42px;font-size:7.00px;line-height:8.75px;color:#1f1f1f;font-weight:normal;white-space:nowrap;-webkit-text-stroke:0.14px #1f1f1f;transform:scaleX(0.9044);transform-origin:left center;">Delete</div>
<svg style="position:absolute;left:535.00px;top:78.30px;overflow:visible" width="3" height="2" viewBox="0 0 3 2"><path d="M0.2 0.2 L1.5 1.6 L2.8 0.2Z" fill="#424242"/></svg>
<svg style="position:absolute;left:495.90px;top:88.30px;overflow:visible" width="8.5" height="8" viewBox="0 0 8.5 8"><rect x="0.4" y="0.4" width="7.6" height="7.2" fill="none" stroke="#424242" stroke-width="0.7"/><rect x="0.4" y="0.4" width="7.6" height="1.8" fill="#3b8ed8"/><path d="M3 2.2 V7.6 M0.4 4.8 H8" stroke="#3b8ed8" stroke-width="0.6"/></svg>
<div style="position:absolute;left:506.70px;top:88.72px;font-size:7.00px;line-height:8.75px;color:#1f1f1f;font-weight:normal;white-space:nowrap;-webkit-text-stroke:0.14px #1f1f1f;transform:scaleX(0.8481);transform-origin:left center;">Format <svg width='4' height='3' style='vertical-align:1px;margin-left:1px' viewBox='0 0 4 3'><path d='M0.4 0.6 L2 2.2 L3.6 0.6' fill='none' stroke='#424242' stroke-width='0.8'/></svg></div>
<svg style="position:absolute;left:554.20px;top:61.30px;overflow:visible" width="7" height="7.8" viewBox="0 0 7 7.8"><path d="M6.6 0.5 H0.6 L3.6 3.9 L0.6 7.3 H6.6" fill="none" stroke="#242424" stroke-width="0.8"/></svg>
<svg style="position:absolute;left:569.00px;top:64.50px;overflow:visible" width="3" height="2" viewBox="0 0 3 2"><path d="M0.2 0.2 L1.5 1.6 L2.8 0.2Z" fill="#424242"/></svg>
<svg style="position:absolute;left:552.90px;top:75.30px;overflow:visible" width="9" height="7.4" viewBox="0 0 9 7.4"><rect x="0.4" y="0.4" width="8.2" height="6.6" fill="none" stroke="#424242" stroke-width="0.8"/><path d="M4.5 1.8 V5.2 M3 3.8 L4.5 5.3 L6 3.8" fill="none" stroke="#0f6cbd" stroke-width="0.8"/></svg>
<svg style="position:absolute;left:565.20px;top:78.30px;overflow:visible" width="3" height="2" viewBox="0 0 3 2"><path d="M0.3 0.3 L1.5 1.6 L2.7 0.3" fill="none" stroke="#424242" stroke-width="0.6"/></svg>
<svg style="position:absolute;left:553.10px;top:88.00px;overflow:visible" width="8" height="7.8" viewBox="0 0 8 7.8"><path d="M0.5 4.5 L4.5 0.5 L7.5 3.5 L3.5 7.5 Z" fill="none" stroke="#b4009e" stroke-width="0.9"/><path d="M2 3 L5 6" stroke="#b4009e" stroke-width="0.9"/></svg>
<svg style="position:absolute;left:565.20px;top:91.30px;overflow:visible" width="3" height="2" viewBox="0 0 3 2"><path d="M0.3 0.3 L1.5 1.6 L2.7 0.3" fill="none" stroke="#424242" stroke-width="0.6"/></svg>
<svg style="position:absolute;left:580.50px;top:62.30px;overflow:visible" width="16" height="14" viewBox="0 0 16 14"><path d="M0.4 6.3 L2.3 0.6 L4.2 6.3 M1 4.5 H3.6" fill="none" stroke="#0f6cbd" stroke-width="0.75"/><path d="M0.5 7.8 H4.2 L0.5 13.2 H4.4" fill="none" stroke="#242424" stroke-width="0.8"/><path d="M6.2 3.2 H15.4 L11.8 7.6 V12 L9.8 10.8 V7.6 Z" fill="none" stroke="#242424" stroke-width="0.8"/></svg>
<div style="position:absolute;left:579.50px;top:78.83px;font-size:7.00px;line-height:8.75px;color:#1f1f1f;font-weight:normal;white-space:nowrap;-webkit-text-stroke:0.14px #1f1f1f;transform:scaleX(0.9253);transform-origin:left center;">Sort &amp;</div>
<div style="position:absolute;left:579.00px;top:88.12px;font-size:7.00px;line-height:8.75px;color:#1f1f1f;font-weight:normal;white-space:nowrap;-webkit-text-stroke:0.14px #1f1f1f;transform:scaleX(0.8311);transform-origin:left center;">Filter <svg width='4' height='3' style='vertical-align:1px;margin-left:1px' viewBox='0 0 4 3'><path d='M0.4 0.6 L2 2.2 L3.6 0.6' fill='none' stroke='#424242' stroke-width='0.8'/></svg></div>
<svg style="position:absolute;left:605.30px;top:61.20px;overflow:visible" width="16" height="16" viewBox="0 0 16 16"><circle cx="10.3" cy="5.7" r="5" fill="none" stroke="#424242" stroke-width="0.8"/><path d="M6.7 9.3 L0.6 15.4" stroke="#424242" stroke-width="0.9"/></svg>
<div style="position:absolute;left:603.70px;top:78.83px;font-size:7.00px;line-height:8.75px;color:#1f1f1f;font-weight:normal;white-space:nowrap;-webkit-text-stroke:0.14px #1f1f1f;transform:scaleX(0.9143);transform-origin:left center;">Find &amp;</div>
<div style="position:absolute;left:602.00px;top:88.12px;font-size:7.00px;line-height:8.75px;color:#1f1f1f;font-weight:normal;white-space:nowrap;-webkit-text-stroke:0.14px #1f1f1f;transform:scaleX(0.8142);transform-origin:left center;">Select <svg width='4' height='3' style='vertical-align:1px;margin-left:1px' viewBox='0 0 4 3'><path d='M0.4 0.6 L2 2.2 L3.6 0.6' fill='none' stroke='#424242' stroke-width='0.8'/></svg></div>
<svg style="position:absolute;left:643.60px;top:61.20px;overflow:visible" width="14.5" height="15.8" viewBox="0 0 14.5 15.8"><rect x="0.5" y="1.5" width="10" height="13.5" fill="none" stroke="#c8c8c8" stroke-width="0.8"/><path d="M3 9 L8 3.5 L11 6.5 L6 12 Z" fill="#fff" stroke="#c8c8c8" stroke-width="0.8"/><path d="M9 2.5 L10.5 1 L13.5 4 L12 5.5" fill="none" stroke="#c8c8c8" stroke-width="0.8"/></svg>
<div style="position:absolute;left:635.80px;top:79.08px;font-size:6.60px;line-height:8.25px;color:#bdbdbd;font-weight:normal;white-space:nowrap;-webkit-text-stroke:0.14px #bdbdbd;transform:scaleX(0.9229);transform-origin:left center;">Sensitivity</div>
<svg style="position:absolute;left:648.50px;top:90.00px;overflow:visible" width="3" height="2" viewBox="0 0 3 2"><path d="M0.2 0.2 L1.5 1.6 L2.8 0.2Z" fill="#c0c0c0"/></svg>
<svg style="position:absolute;left:677.90px;top:61.20px;overflow:visible" width="15.2" height="15.7" viewBox="0 0 15.2 15.7"><rect x="0.5" y="0.5" width="14.2" height="14.7" rx="1" fill="none" stroke="#e8643c" stroke-width="0.9"/><rect x="2.3" y="2.3" width="4.5" height="4.8" rx="0.7" fill="none" stroke="#e8643c" stroke-width="0.9"/><rect x="8.4" y="2.3" width="4.5" height="4.8" rx="0.7" fill="none" stroke="#e8643c" stroke-width="0.9"/><rect x="2.3" y="8.6" width="4.5" height="4.8" rx="0.7" fill="none" stroke="#e8643c" stroke-width="0.9"/><rect x="8.4" y="8.6" width="4.5" height="4.8" rx="0.7" fill="none" stroke="#e8643c" stroke-width="0.9"/></svg>
<div style="position:absolute;left:674.20px;top:78.83px;font-size:7.00px;line-height:8.75px;color:#1f1f1f;font-weight:normal;white-space:nowrap;-webkit-text-stroke:0.14px #1f1f1f;transform:scaleX(0.9354);transform-origin:left center;">Add-ins</div>
<svg style="position:absolute;left:710.70px;top:61.20px;overflow:visible" width="15.2" height="15.7" viewBox="0 0 15.2 15.7"><rect x="0.6" y="0.6" width="14" height="14.5" rx="1" fill="#fff" stroke="#6a6a6a" stroke-width="1.1"/><path d="M0.6 3.8 H14.6 M0.6 11.2 H14.6 M4 11.2 V15.1 M8.5 11.2 V15.1 M11.8 0.6 V11.2" stroke="#9a9a9a" stroke-width="0.6"/><circle cx="6.8" cy="6.4" r="3.6" fill="#fff" stroke="#3a3a3a" stroke-width="0.9"/><path d="M9.4 9 L13.2 12.8" stroke="#3a3a3a" stroke-width="1.1"/><rect x="6.1" y="4.4" width="1.6" height="3.6" fill="#0f6cbd"/><rect x="4.8" y="5.6" width="1.2" height="2.4" fill="#3a3a3a"/></svg>
<div style="position:absolute;left:707.20px;top:78.83px;font-size:7.00px;line-height:8.75px;color:#1f1f1f;font-weight:normal;white-space:nowrap;-webkit-text-stroke:0.14px #1f1f1f;transform:scaleX(0.8753);transform-origin:left center;">Analyze</div>
<div style="position:absolute;left:712.00px;top:88.12px;font-size:7.00px;line-height:8.75px;color:#1f1f1f;font-weight:normal;white-space:nowrap;-webkit-text-stroke:0.14px #1f1f1f;transform:scaleX(0.8650);transform-origin:left center;">Data</div>
<svg style="position:absolute;left:735.00px;top:61.30px;overflow:visible" width="15.2" height="15" viewBox="0 0 15.2 15"><defs><linearGradient id="cpA" x1="0" y1="0" x2="0" y2="1"><stop offset="0" stop-color="#1b7fd6"/><stop offset="0.5" stop-color="#27b58f"/><stop offset="1" stop-color="#f6b726"/></linearGradient><linearGradient id="cpB" x1="0" y1="0" x2="0.3" y2="1"><stop offset="0" stop-color="#7b3fe0"/><stop offset="0.45" stop-color="#e8498a"/><stop offset="1" stop-color="#f4573c"/></linearGradient><clipPath id="cpL"><path d="M0 0 H9.5 L5.5 15 H0Z"/></clipPath><clipPath id="cpR"><path d="M9.5 0 H16 V15 H5.5Z"/></clipPath></defs><path id="cpS" d="M4 0.8 H11.2 C13.4 0.8 15.2 2.6 14.7 4.8 L13.2 10.8 C12.7 12.9 11 14.3 9 14.3 H3.8 C1.6 14.3 0 12.6 0.5 10.4 L2 4.4 C2.5 2.3 3.8 0.8 4 0.8Z" fill="url(#cpA)" clip-path="url(#cpL)"/><path d="M4 0.8 H11.2 C13.4 0.8 15.2 2.6 14.7 4.8 L13.2 10.8 C12.7 12.9 11 14.3 9 14.3 H3.8 C1.6 14.3 0 12.6 0.5 10.4 L2 4.4 C2.5 2.3 3.8 0.8 4 0.8Z" fill="url(#cpB)" clip-path="url(#cpR)"/><path d="M11.5 0.8 C12.5 1 13 1.8 12.6 3 L11.8 5 H9.8Z" fill="#15407a" opacity="0.7"/><path d="M9 3.6 L6.3 11.6" stroke="#fff" stroke-width="1.3"/></svg>
<div style="position:absolute;left:732.60px;top:78.83px;font-size:7.00px;line-height:8.75px;color:#1f1f1f;font-weight:normal;white-space:nowrap;-webkit-text-stroke:0.14px #1f1f1f;transform:scaleX(0.9451);transform-origin:left center;">Copilot</div>
<svg style="position:absolute;left:788.00px;top:101.00px;overflow:visible" width="5" height="3" viewBox="0 0 5 3"><path d="M0.4 0.4 L2.5 2.5 L4.6 0.4" fill="none" stroke="#424242" stroke-width="0.8"/></svg>
<div style="position:absolute;left:0.00px;top:114.00px;width:50.00px;height:12.50px;background:#fff;border-radius:0 3px 3px 0;box-shadow:0 0.5px 0.8px rgba(0,0,0,0.12)"></div>
<div style="position:absolute;left:-0.30px;top:115.62px;font-size:7.80px;line-height:9.75px;color:#242424;font-weight:normal;white-space:nowrap;-webkit-text-stroke:0.1px #242424;transform:scaleX(0.8334);transform-origin:left center;-webkit-text-stroke:0.25px #242424">BP12</div>
<svg style="position:absolute;left:41.90px;top:118.80px;overflow:visible" width="5" height="3" viewBox="0 0 5 3"><path d="M0.4 0.4 L2.5 2.5 L4.6 0.4" fill="none" stroke="#424242" stroke-width="0.8"/></svg>
<div style="position:absolute;left:54.50px;top:116.90px;width:1.10px;height:1.00px;background:#424242"></div>
<div style="position:absolute;left:54.50px;top:119.40px;width:1.10px;height:1.00px;background:#424242"></div>
<div style="position:absolute;left:54.50px;top:121.90px;width:1.10px;height:1.00px;background:#424242"></div>
<div style="position:absolute;left:61.20px;top:114.00px;width:43.80px;height:12.50px;background:#fff;border-radius:3px;box-shadow:0 0.5px 0.8px rgba(0,0,0,0.12)"></div>
<svg style="position:absolute;left:63.80px;top:116.50px;overflow:visible" width="7.5" height="7.5" viewBox="0 0 7.5 7.5"><path d="M0.5 0.5 L7 7 M7 0.5 L0.5 7" stroke="#b5b5b5" stroke-width="0.7"/></svg>
<svg style="position:absolute;left:75.60px;top:116.80px;overflow:visible" width="8" height="6.5" viewBox="0 0 8 6.5"><path d="M0.5 3.5 L3 6 L7.8 0.5" fill="none" stroke="#b5b5b5" stroke-width="0.7"/></svg>
<div style="position:absolute;left:89.20px;top:114.97px;font-size:9.00px;line-height:11.25px;color:#242424;font-weight:normal;white-space:nowrap;-webkit-text-stroke:0.1px #242424;transform:scaleX(1.1692);transform-origin:left center;font-style:italic;font-family:'Liberation Serif',serif;-webkit-text-stroke:0.3px #242424">fx</div>
<svg style="position:absolute;left:99.80px;top:119.00px;overflow:visible" width="4.4" height="2.6" viewBox="0 0 4.4 2.6"><path d="M0.3 0.3 L2.2 2.2 L4.1 0.3" fill="none" stroke="#7a7a7a" stroke-width="0.65"/></svg>
<div style="position:absolute;left:108.80px;top:114.00px;width:688.60px;height:12.20px;background:#fff;border-radius:3px;box-shadow:0 0.5px 0.8px rgba(0,0,0,0.12)"></div>
<svg style="position:absolute;left:790.40px;top:118.60px;overflow:visible" width="5.3" height="3" viewBox="0 0 5.3 3"><path d="M0.4 0.4 L2.65 2.5 L4.9 0.4" fill="none" stroke="#424242" stroke-width="0.8"/></svg>
<div style="position:absolute;left:0.00px;top:129.00px;width:800.00px;height:288.00px;background:#ffffff"></div>
<div style="position:absolute;left:0.00px;top:129.00px;width:791.30px;height:10.30px;background:#fafafa"></div>
<div style="position:absolute;left:0.00px;top:139.00px;width:791.30px;height:0.60px;background:#d9d9d9"></div>
<svg style="position:absolute;left:0.50px;top:131.00px;overflow:visible" width="5" height="7" viewBox="0 0 5 7"><path d="M5 0.5 V6.5 H0" fill="#dcdcdc"/></svg>
<div style="position:absolute;left:0.00px;top:139.60px;width:6.50px;height:277.40px;background:#f7f7f7"></div>
<div style="position:absolute;left:6.10px;top:129.00px;width:0.60px;height:288.00px;background:#d4d4d4"></div>
<div style="position:absolute;left:681.00px;top:129.00px;width:34.00px;height:10.30px;background:#dadada"></div>
<div style="position:absolute;left:681.00px;top:138.50px;width:34.00px;height:1.10px;background:#107c41"></div>
<div style="position:absolute;left:76.70px;top:129.00px;width:0.60px;height:10.00px;background:#e9e9e9"></div>
<div style="position:absolute;left:-158.25px;width:400px;text-align:center;top:131.03px;font-size:7.00px;line-height:8.75px;color:#262626;font-weight:normal;white-space:nowrap;-webkit-text-stroke:0.1px #262626;transform:scaleX(0.8);-webkit-text-stroke:0.15px currentColor">BE</div>
<div style="position:absolute;left:167.70px;top:129.00px;width:0.60px;height:10.00px;background:#e9e9e9"></div>
<div style="position:absolute;left:-77.50px;width:400px;text-align:center;top:131.03px;font-size:7.00px;line-height:8.75px;color:#262626;font-weight:normal;white-space:nowrap;-webkit-text-stroke:0.1px #262626;transform:scaleX(0.8);-webkit-text-stroke:0.15px currentColor">BF</div>
<div style="position:absolute;left:221.20px;top:129.00px;width:0.60px;height:10.00px;background:#e9e9e9"></div>
<div style="position:absolute;left:-5.25px;width:400px;text-align:center;top:131.03px;font-size:7.00px;line-height:8.75px;color:#262626;font-weight:normal;white-space:nowrap;-webkit-text-stroke:0.1px #262626;transform:scaleX(0.8);-webkit-text-stroke:0.15px currentColor">BG</div>
<div style="position:absolute;left:261.70px;top:129.00px;width:0.60px;height:10.00px;background:#e9e9e9"></div>
<div style="position:absolute;left:41.75px;width:400px;text-align:center;top:131.03px;font-size:7.00px;line-height:8.75px;color:#262626;font-weight:normal;white-space:nowrap;-webkit-text-stroke:0.1px #262626;transform:scaleX(0.8);-webkit-text-stroke:0.15px currentColor">BH</div>
<div style="position:absolute;left:356.70px;top:129.00px;width:0.60px;height:10.00px;background:#e9e9e9"></div>
<div style="position:absolute;left:109.50px;width:400px;text-align:center;top:131.03px;font-size:7.00px;line-height:8.75px;color:#262626;font-weight:normal;white-space:nowrap;-webkit-text-stroke:0.1px #262626;transform:scaleX(0.8);-webkit-text-stroke:0.15px currentColor">BI</div>
<div style="position:absolute;left:405.70px;top:129.00px;width:0.60px;height:10.00px;background:#e9e9e9"></div>
<div style="position:absolute;left:181.50px;width:400px;text-align:center;top:131.03px;font-size:7.00px;line-height:8.75px;color:#262626;font-weight:normal;white-space:nowrap;-webkit-text-stroke:0.1px #262626;transform:scaleX(0.8);-webkit-text-stroke:0.15px currentColor">BJ</div>
<div style="position:absolute;left:491.70px;top:129.00px;width:0.60px;height:10.00px;background:#e9e9e9"></div>
<div style="position:absolute;left:249.00px;width:400px;text-align:center;top:131.03px;font-size:7.00px;line-height:8.75px;color:#262626;font-weight:normal;white-space:nowrap;-webkit-text-stroke:0.1px #262626;transform:scaleX(0.8);-webkit-text-stroke:0.15px currentColor">BK</div>
<div style="position:absolute;left:533.20px;top:129.00px;width:0.60px;height:10.00px;background:#e9e9e9"></div>
<div style="position:absolute;left:312.75px;width:400px;text-align:center;top:131.03px;font-size:7.00px;line-height:8.75px;color:#262626;font-weight:normal;white-space:nowrap;-webkit-text-stroke:0.1px #262626;transform:scaleX(0.8);-webkit-text-stroke:0.15px currentColor">BL</div>
<div style="position:absolute;left:573.90px;top:129.00px;width:0.60px;height:10.00px;background:#e9e9e9"></div>
<div style="position:absolute;left:353.85px;width:400px;text-align:center;top:131.03px;font-size:7.00px;line-height:8.75px;color:#262626;font-weight:normal;white-space:nowrap;-webkit-text-stroke:0.1px #262626;transform:scaleX(0.8);-webkit-text-stroke:0.15px currentColor">BM</div>
<div style="position:absolute;left:647.00px;top:129.00px;width:0.60px;height:10.00px;background:#e9e9e9"></div>
<div style="position:absolute;left:410.75px;width:400px;text-align:center;top:131.03px;font-size:7.00px;line-height:8.75px;color:#262626;font-weight:normal;white-space:nowrap;-webkit-text-stroke:0.1px #262626;transform:scaleX(0.8);-webkit-text-stroke:0.15px currentColor">BN</div>
<div style="position:absolute;left:680.70px;top:129.00px;width:0.60px;height:10.00px;background:#e9e9e9"></div>
<div style="position:absolute;left:464.15px;width:400px;text-align:center;top:131.03px;font-size:7.00px;line-height:8.75px;color:#262626;font-weight:normal;white-space:nowrap;-webkit-text-stroke:0.1px #262626;transform:scaleX(0.8);-webkit-text-stroke:0.15px currentColor">BO</div>
<div style="position:absolute;left:714.70px;top:129.00px;width:0.60px;height:10.00px;background:#e9e9e9"></div>
<div style="position:absolute;left:498.00px;width:400px;text-align:center;top:131.03px;font-size:7.00px;line-height:8.75px;color:#107c41;font-weight:normal;white-space:nowrap;-webkit-text-stroke:0.1px #107c41;transform:scaleX(0.8);-webkit-text-stroke:0.15px currentColor">BP</div>
<div style="position:absolute;left:748.20px;top:129.00px;width:0.60px;height:10.00px;background:#e9e9e9"></div>
<div style="position:absolute;left:531.75px;width:400px;text-align:center;top:131.03px;font-size:7.00px;line-height:8.75px;color:#262626;font-weight:normal;white-space:nowrap;-webkit-text-stroke:0.1px #262626;transform:scaleX(0.8);-webkit-text-stroke:0.15px currentColor">BQ</div>
<div style="position:absolute;left:782.30px;top:129.00px;width:0.60px;height:10.00px;background:#e9e9e9"></div>
<div style="position:absolute;left:565.55px;width:400px;text-align:center;top:131.03px;font-size:7.00px;line-height:8.75px;color:#262626;font-weight:normal;white-space:nowrap;-webkit-text-stroke:0.1px #262626;transform:scaleX(0.8);-webkit-text-stroke:0.15px currentColor">BR</div>
<div style="position:absolute;left:791.00px;top:129.00px;width:0.60px;height:10.00px;background:#e9e9e9"></div>
<div style="position:absolute;left:6.70px;top:149.10px;width:784.60px;height:0.60px;background:#e1e1e1"></div>
<div style="position:absolute;left:6.70px;top:179.20px;width:784.60px;height:0.60px;background:#e1e1e1"></div>
<div style="position:absolute;left:6.70px;top:190.00px;width:784.60px;height:0.60px;background:#e1e1e1"></div>
<div style="position:absolute;left:6.70px;top:199.90px;width:784.60px;height:0.60px;background:#e1e1e1"></div>
<div style="position:absolute;left:6.70px;top:210.30px;width:784.60px;height:0.60px;background:#e1e1e1"></div>
<div style="position:absolute;left:6.70px;top:311.00px;width:784.60px;height:0.60px;background:#e1e1e1"></div>
<div style="position:absolute;left:6.70px;top:321.20px;width:784.60px;height:0.60px;background:#e1e1e1"></div>
<div style="position:absolute;left:6.70px;top:331.10px;width:784.60px;height:0.60px;background:#e1e1e1"></div>
<div style="position:absolute;left:6.70px;top:362.00px;width:784.60px;height:0.60px;background:#e1e1e1"></div>
<div style="position:absolute;left:6.70px;top:371.70px;width:784.60px;height:0.60px;background:#e1e1e1"></div>
<div style="position:absolute;left:6.70px;top:381.80px;width:784.60px;height:0.60px;background:#e1e1e1"></div>
<div style="position:absolute;left:6.70px;top:392.10px;width:784.60px;height:0.60px;background:#e1e1e1"></div>
<div style="position:absolute;left:6.70px;top:402.00px;width:784.60px;height:0.60px;background:#e1e1e1"></div>
<div style="position:absolute;left:6.70px;top:411.90px;width:784.60px;height:0.60px;background:#e1e1e1"></div>
<div style="position:absolute;left:6.70px;top:422.20px;width:784.60px;height:0.60px;background:#e1e1e1"></div>
<div style="position:absolute;left:76.70px;top:382.10px;width:0.60px;height:34.90px;background:#e1e1e1"></div>
<div style="position:absolute;left:167.70px;top:382.10px;width:0.60px;height:34.90px;background:#e1e1e1"></div>
<div style="position:absolute;left:221.20px;top:382.10px;width:0.60px;height:34.90px;background:#e1e1e1"></div>
<div style="position:absolute;left:261.70px;top:382.10px;width:0.60px;height:34.90px;background:#e1e1e1"></div>
<div style="position:absolute;left:356.70px;top:382.10px;width:0.60px;height:34.90px;background:#e1e1e1"></div>
<div style="position:absolute;left:405.70px;top:382.10px;width:0.60px;height:34.90px;background:#e1e1e1"></div>
<div style="position:absolute;left:491.70px;top:382.10px;width:0.60px;height:34.90px;background:#e1e1e1"></div>
<div style="position:absolute;left:533.20px;top:382.10px;width:0.60px;height:34.90px;background:#e1e1e1"></div>
<div style="position:absolute;left:573.90px;top:382.10px;width:0.60px;height:34.90px;background:#e1e1e1"></div>
<div style="position:absolute;left:647.00px;top:382.10px;width:0.60px;height:34.90px;background:#e1e1e1"></div>
<div style="position:absolute;left:680.70px;top:382.10px;width:0.60px;height:34.90px;background:#e1e1e1"></div>
<div style="position:absolute;left:714.70px;top:382.10px;width:0.60px;height:34.90px;background:#e1e1e1"></div>
<div style="position:absolute;left:748.20px;top:139.60px;width:0.60px;height:277.40px;background:#e1e1e1"></div>
<div style="position:absolute;left:782.30px;top:139.60px;width:0.60px;height:277.40px;background:#e1e1e1"></div>
<div style="position:absolute;left:791.00px;top:139.60px;width:0.60px;height:277.40px;background:#e1e1e1"></div>
<div style="position:absolute;left:573.90px;top:179.50px;width:0.60px;height:10.80px;background:#e1e1e1"></div>
<div style="position:absolute;left:647.00px;top:179.50px;width:0.60px;height:10.80px;background:#e1e1e1"></div>
<div style="position:absolute;left:221.20px;top:200.20px;width:0.60px;height:10.40px;background:#e1e1e1"></div>
<div style="position:absolute;left:261.70px;top:200.20px;width:0.60px;height:10.40px;background:#e1e1e1"></div>
<div style="position:absolute;left:356.70px;top:200.20px;width:0.60px;height:10.40px;background:#e1e1e1"></div>
<div style="position:absolute;left:573.90px;top:200.20px;width:0.60px;height:10.40px;background:#e1e1e1"></div>
<div style="position:absolute;left:647.00px;top:200.20px;width:0.60px;height:10.40px;background:#e1e1e1"></div>
<div style="position:absolute;left:221.20px;top:311.30px;width:0.60px;height:10.20px;background:#e1e1e1"></div>
<div style="position:absolute;left:261.70px;top:311.30px;width:0.60px;height:10.20px;background:#e1e1e1"></div>
<div style="position:absolute;left:356.70px;top:311.30px;width:0.60px;height:10.20px;background:#e1e1e1"></div>
<div style="position:absolute;left:647.00px;top:311.30px;width:0.60px;height:10.20px;background:#e1e1e1"></div>
<div style="position:absolute;left:76.70px;top:331.40px;width:0.60px;height:30.90px;background:#e1e1e1"></div>
<div style="position:absolute;left:167.70px;top:331.40px;width:0.60px;height:30.90px;background:#e1e1e1"></div>
<div style="position:absolute;left:221.20px;top:331.40px;width:0.60px;height:30.90px;background:#e1e1e1"></div>
<div style="position:absolute;left:261.70px;top:331.40px;width:0.60px;height:30.90px;background:#e1e1e1"></div>
<div style="position:absolute;left:405.70px;top:331.40px;width:0.60px;height:30.90px;background:#e1e1e1"></div>
<div style="position:absolute;left:533.20px;top:331.40px;width:0.60px;height:30.90px;background:#e1e1e1"></div>
<div style="position:absolute;left:573.90px;top:331.40px;width:0.60px;height:30.90px;background:#e1e1e1"></div>
<div style="position:absolute;left:647.00px;top:331.40px;width:0.60px;height:30.90px;background:#e1e1e1"></div>
<div style="position:absolute;left:680.70px;top:331.40px;width:0.60px;height:30.90px;background:#e1e1e1"></div>
<div style="position:absolute;left:167.70px;top:372.00px;width:0.60px;height:10.10px;background:#e1e1e1"></div>
<div style="position:absolute;left:221.20px;top:372.00px;width:0.60px;height:10.10px;background:#e1e1e1"></div>
<div style="position:absolute;left:356.70px;top:372.00px;width:0.60px;height:10.10px;background:#e1e1e1"></div>
<div style="position:absolute;left:573.90px;top:372.00px;width:0.60px;height:10.10px;background:#e1e1e1"></div>
<div style="position:absolute;left:647.00px;top:372.00px;width:0.60px;height:10.10px;background:#e1e1e1"></div>
<div style="position:absolute;left:0.00px;top:149.10px;width:6.10px;height:0.60px;background:#dcdcdc"></div>
<div style="position:absolute;right:798.30px;text-align:right;top:170.28px;font-size:6.60px;line-height:8.25px;color:#424242;font-weight:normal;white-space:nowrap;-webkit-text-stroke:0.1px #424242;transform:scaleX(0.85);transform-origin:right center">2</div>
<div style="position:absolute;left:0.00px;top:179.20px;width:6.10px;height:0.60px;background:#dcdcdc"></div>
<div style="position:absolute;right:798.30px;text-align:right;top:181.08px;font-size:6.60px;line-height:8.25px;color:#424242;font-weight:normal;white-space:nowrap;-webkit-text-stroke:0.1px #424242;transform:scaleX(0.85);transform-origin:right center">3</div>
<div style="position:absolute;left:0.00px;top:190.00px;width:6.10px;height:0.60px;background:#dcdcdc"></div>
<div style="position:absolute;right:798.30px;text-align:right;top:190.97px;font-size:6.60px;line-height:8.25px;color:#424242;font-weight:normal;white-space:nowrap;-webkit-text-stroke:0.1px #424242;transform:scaleX(0.85);transform-origin:right center">4</div>
<div style="position:absolute;left:0.00px;top:199.90px;width:6.10px;height:0.60px;background:#dcdcdc"></div>
<div style="position:absolute;right:798.30px;text-align:right;top:201.38px;font-size:6.60px;line-height:8.25px;color:#424242;font-weight:normal;white-space:nowrap;-webkit-text-stroke:0.1px #424242;transform:scaleX(0.85);transform-origin:right center">5</div>
<div style="position:absolute;left:0.00px;top:210.30px;width:6.10px;height:0.60px;background:#dcdcdc"></div>
<div style="position:absolute;right:798.30px;text-align:right;top:302.07px;font-size:6.60px;line-height:8.25px;color:#424242;font-weight:normal;white-space:nowrap;-webkit-text-stroke:0.1px #424242;transform:scaleX(0.85);transform-origin:right center">6</div>
<div style="position:absolute;left:0.00px;top:311.00px;width:6.10px;height:0.60px;background:#dcdcdc"></div>
<div style="position:absolute;right:798.30px;text-align:right;top:312.27px;font-size:6.60px;line-height:8.25px;color:#424242;font-weight:normal;white-space:nowrap;-webkit-text-stroke:0.1px #424242;transform:scaleX(0.85);transform-origin:right center">7</div>
<div style="position:absolute;left:0.00px;top:321.20px;width:6.10px;height:0.60px;background:#dcdcdc"></div>
<div style="position:absolute;right:798.30px;text-align:right;top:322.17px;font-size:6.60px;line-height:8.25px;color:#424242;font-weight:normal;white-space:nowrap;-webkit-text-stroke:0.1px #424242;transform:scaleX(0.85);transform-origin:right center">8</div>
<div style="position:absolute;left:0.00px;top:331.10px;width:6.10px;height:0.60px;background:#dcdcdc"></div>
<div style="position:absolute;right:798.30px;text-align:right;top:353.07px;font-size:6.60px;line-height:8.25px;color:#424242;font-weight:normal;white-space:nowrap;-webkit-text-stroke:0.1px #424242;transform:scaleX(0.85);transform-origin:right center">9</div>
<div style="position:absolute;left:0.00px;top:362.00px;width:6.10px;height:0.60px;background:#dcdcdc"></div>
<div style="position:absolute;right:796.70px;text-align:right;top:362.77px;font-size:6.60px;line-height:8.25px;color:#424242;font-weight:normal;white-space:nowrap;-webkit-text-stroke:0.1px #424242;transform:scaleX(0.85);transform-origin:right center">0</div>
<div style="position:absolute;left:0.00px;top:371.70px;width:6.10px;height:0.60px;background:#dcdcdc"></div>
<div style="position:absolute;right:796.70px;text-align:right;top:372.88px;font-size:6.60px;line-height:8.25px;color:#424242;font-weight:normal;white-space:nowrap;-webkit-text-stroke:0.1px #424242;transform:scaleX(0.85);transform-origin:right center">1</div>
<div style="position:absolute;left:0.00px;top:381.80px;width:6.10px;height:0.60px;background:#dcdcdc"></div>
<div style="position:absolute;right:796.70px;text-align:right;top:383.17px;font-size:6.60px;line-height:8.25px;color:#107c41;font-weight:normal;white-space:nowrap;-webkit-text-stroke:0.1px #107c41;transform:scaleX(0.85);transform-origin:right center">2</div>
<div style="position:absolute;left:0.00px;top:392.10px;width:6.10px;height:0.60px;background:#dcdcdc"></div>
<div style="position:absolute;right:796.70px;text-align:right;top:393.07px;font-size:6.60px;line-height:8.25px;color:#424242;font-weight:normal;white-space:nowrap;-webkit-text-stroke:0.1px #424242;transform:scaleX(0.85);transform-origin:right center">3</div>
<div style="position:absolute;left:0.00px;top:402.00px;width:6.10px;height:0.60px;background:#dcdcdc"></div>
<div style="position:absolute;right:796.70px;text-align:right;top:402.97px;font-size:6.60px;line-height:8.25px;color:#424242;font-weight:normal;white-space:nowrap;-webkit-text-stroke:0.1px #424242;transform:scaleX(0.85);transform-origin:right center">4</div>
<div style="position:absolute;left:0.00px;top:411.90px;width:6.10px;height:0.60px;background:#dcdcdc"></div>
<div style="position:absolute;right:796.70px;text-align:right;top:413.27px;font-size:6.60px;line-height:8.25px;color:#424242;font-weight:normal;white-space:nowrap;-webkit-text-stroke:0.1px #424242;transform:scaleX(0.85);transform-origin:right center">5</div>
<div style="position:absolute;left:0.00px;top:422.20px;width:6.10px;height:0.60px;background:#dcdcdc"></div>
<div style="position:absolute;left:5.70px;top:382.10px;width:1.10px;height:10.30px;background:#107c41"></div>
<div style="position:absolute;left:6.70px;top:139.60px;width:708.30px;height:9.80px;background:#0e4a76"></div>
<div style="position:absolute;left:6.70px;top:150.40px;width:708.30px;height:29.10px;background:#bde3f4"></div>
<div style="position:absolute;left:6.70px;top:178.95px;width:708.30px;height:1.10px;background:#7cc2ea"></div>
<div style="position:absolute;left:6.70px;top:189.75px;width:708.30px;height:1.10px;background:#7cc2ea"></div>
<div style="position:absolute;left:6.70px;top:190.30px;width:708.30px;height:9.90px;background:#bde3f4"></div>
<div style="position:absolute;left:6.70px;top:199.65px;width:708.30px;height:1.10px;background:#7cc2ea"></div>
<div style="position:absolute;left:6.70px;top:210.05px;width:708.30px;height:1.10px;background:#7cc2ea"></div>
<div style="position:absolute;left:6.70px;top:210.60px;width:708.30px;height:100.70px;background:#bde3f4"></div>
<div style="position:absolute;left:6.70px;top:310.75px;width:708.30px;height:1.10px;background:#7cc2ea"></div>
<div style="position:absolute;left:6.70px;top:320.95px;width:708.30px;height:1.10px;background:#7cc2ea"></div>
<div style="position:absolute;left:6.70px;top:321.50px;width:708.30px;height:9.90px;background:#bde3f4"></div>
<div style="position:absolute;left:6.70px;top:330.85px;width:708.30px;height:1.10px;background:#7cc2ea"></div>
<div style="position:absolute;left:6.70px;top:361.75px;width:708.30px;height:1.10px;background:#7cc2ea"></div>
<div style="position:absolute;left:6.70px;top:362.30px;width:708.30px;height:9.70px;background:#bde3f4"></div>
<div style="position:absolute;left:6.70px;top:371.45px;width:708.30px;height:1.10px;background:#7cc2ea"></div>
<div style="position:absolute;left:6.70px;top:381.55px;width:708.30px;height:1.10px;background:#7cc2ea"></div>
<div style="position:absolute;left:6.70px;top:149.40px;width:708.30px;height:1.00px;background:#eef7fc"></div>
<div style="position:absolute;left:714.60px;top:139.60px;width:0.80px;height:242.50px;background:#8fcdee"></div>
<div style="position:absolute;left:6.70px;top:139.60px;width:70.30px;height:10.00px;background:#1e5a8a"></div>
<div style="position:absolute;left:6.70px;top:139.60px;width:61.50px;height:10.00px;overflow:hidden">
<div dir="rtl" style="position:absolute;right:-0.55px;text-align:right;top:1.65px;font-size:6.00px;line-height:7.50px;color:#ffffff;font-weight:bold;white-space:nowrap;-webkit-text-stroke:0.1px #ffffff;transform:scaleX(0.9322);transform-origin:right center;">ن متوقفة على الترحيل</div>
</div>
<div style="position:absolute;left:68.20px;top:140.30px;width:8.60px;height:8.50px;background:#fdfdfd;border-top:0.8px solid #b9c3cc;box-sizing:border-box"></div>
<svg style="position:absolute;left:70.70px;top:143.40px;overflow:visible" width="3.6" height="2.4" viewBox="0 0 3.6 2.4"><path d="M0.1 0.1 L1.8 2.2 L3.5 0.1Z" fill="#222"/></svg>
<div style="position:absolute;left:77.00px;top:139.60px;width:91.00px;height:10.00px;background:#0b416f"></div>
<div style="position:absolute;left:77.00px;top:139.60px;width:82.20px;height:10.00px;overflow:hidden">
<div style="position:absolute;left:2.00px;top:1.05px;font-size:7.60px;line-height:9.50px;color:#ffffff;font-weight:bold;white-space:nowrap;-webkit-text-stroke:0.1px #ffffff;transform:scaleX(0.8838);transform-origin:left center;">variance availability date</div>
</div>
<div style="position:absolute;left:159.20px;top:140.30px;width:8.60px;height:8.50px;background:#fdfdfd;border-top:0.8px solid #b9c3cc;box-sizing:border-box"></div>
<svg style="position:absolute;left:161.70px;top:143.40px;overflow:visible" width="3.6" height="2.4" viewBox="0 0 3.6 2.4"><path d="M0.1 0.1 L1.8 2.2 L3.5 0.1Z" fill="#222"/></svg>
<div style="position:absolute;left:168.00px;top:139.60px;width:53.50px;height:10.00px;background:#0b416f"></div>
<div style="position:absolute;left:168.00px;top:139.60px;width:44.70px;height:10.00px;overflow:hidden">
<div style="position:absolute;left:1.40px;top:1.05px;font-size:7.60px;line-height:9.50px;color:#ffffff;font-weight:bold;white-space:nowrap;-webkit-text-stroke:0.1px #ffffff;transform:scaleX(0.8476);transform-origin:left center;">Status Fainl 2</div>
</div>
<div style="position:absolute;left:212.70px;top:140.30px;width:8.60px;height:8.50px;background:#fdfdfd;border-top:0.8px solid #b9c3cc;box-sizing:border-box"></div>
<svg style="position:absolute;left:215.20px;top:143.40px;overflow:visible" width="3.6" height="2.4" viewBox="0 0 3.6 2.4"><path d="M0.1 0.1 L1.8 2.2 L3.5 0.1Z" fill="#222"/></svg>
<div style="position:absolute;left:221.50px;top:139.60px;width:40.50px;height:10.00px;background:#0b416f"></div>
<div style="position:absolute;left:221.50px;top:139.60px;width:31.70px;height:10.00px;overflow:hidden">
<div style="position:absolute;left:1.00px;top:1.05px;font-size:7.60px;line-height:9.50px;color:#ffffff;font-weight:bold;white-space:nowrap;-webkit-text-stroke:0.1px #ffffff;transform:scaleX(0.8631);transform-origin:left center;">ldv_notes</div>
</div>
<div style="position:absolute;left:253.20px;top:140.30px;width:8.60px;height:8.50px;background:#fdfdfd;border-top:0.8px solid #b9c3cc;box-sizing:border-box"></div>
<svg style="position:absolute;left:255.70px;top:143.40px;overflow:visible" width="3.6" height="2.4" viewBox="0 0 3.6 2.4"><path d="M0.1 0.1 L1.8 2.2 L3.5 0.1Z" fill="#222"/></svg>
<div style="position:absolute;left:262.00px;top:139.60px;width:95.00px;height:10.00px;background:#0b416f"></div>
<div style="position:absolute;left:262.00px;top:139.60px;width:86.20px;height:10.00px;overflow:hidden">
<div style="position:absolute;left:1.75px;top:1.05px;font-size:7.60px;line-height:9.50px;color:#ffffff;font-weight:bold;white-space:nowrap;-webkit-text-stroke:0.1px #ffffff;transform:scaleX(0.8640);transform-origin:left center;">ldv_technicalsupportnotes</div>
</div>
<div style="position:absolute;left:348.20px;top:140.30px;width:8.60px;height:8.50px;background:#fdfdfd;border-top:0.8px solid #b9c3cc;box-sizing:border-box"></div>
<svg style="position:absolute;left:350.70px;top:143.40px;overflow:visible" width="3.6" height="2.4" viewBox="0 0 3.6 2.4"><path d="M0.1 0.1 L1.8 2.2 L3.5 0.1Z" fill="#222"/></svg>
<div style="position:absolute;left:357.00px;top:139.60px;width:49.00px;height:10.00px;background:#1e5a8a"></div>
<div style="position:absolute;left:357.00px;top:139.60px;width:40.20px;height:10.00px;overflow:hidden">
<div dir="rtl" style="position:absolute;right:-0.80px;text-align:right;top:1.65px;font-size:6.00px;line-height:7.50px;color:#ffffff;font-weight:bold;white-space:nowrap;-webkit-text-stroke:0.1px #ffffff;transform:scaleX(1.1564);transform-origin:right center;">نيف المتلق</div>
</div>
<div style="position:absolute;left:397.20px;top:140.30px;width:8.60px;height:8.50px;background:#fdfdfd;border-top:0.8px solid #b9c3cc;box-sizing:border-box"></div>
<svg style="position:absolute;left:399.70px;top:143.40px;overflow:visible" width="3.6" height="2.4" viewBox="0 0 3.6 2.4"><path d="M0.1 0.1 L1.8 2.2 L3.5 0.1Z" fill="#222"/></svg>
<div style="position:absolute;left:406.00px;top:139.60px;width:86.00px;height:10.00px;background:#0b416f"></div>
<div style="position:absolute;left:406.00px;top:139.60px;width:77.20px;height:10.00px;overflow:hidden">
<div style="position:absolute;left:2.50px;top:1.05px;font-size:7.60px;line-height:9.50px;color:#ffffff;font-weight:bold;white-space:nowrap;-webkit-text-stroke:0.1px #ffffff;transform:scaleX(0.8751);transform-origin:left center;">local date of availability</div>
</div>
<div style="position:absolute;left:483.20px;top:140.30px;width:8.60px;height:8.50px;background:#fdfdfd;border-top:0.8px solid #b9c3cc;box-sizing:border-box"></div>
<svg style="position:absolute;left:485.70px;top:143.40px;overflow:visible" width="3.6" height="2.4" viewBox="0 0 3.6 2.4"><path d="M0.1 0.1 L1.8 2.2 L3.5 0.1Z" fill="#222"/></svg>
<div style="position:absolute;left:492.00px;top:139.60px;width:41.50px;height:10.00px;background:#0b416f"></div>
<div style="position:absolute;left:492.00px;top:139.60px;width:32.70px;height:10.00px;overflow:hidden">
<div style="position:absolute;left:2.40px;top:1.05px;font-size:7.60px;line-height:9.50px;color:#ffffff;font-weight:bold;white-space:nowrap;-webkit-text-stroke:0.1px #ffffff;transform:scaleX(0.8360);transform-origin:left center;">New Area</div>
</div>
<div style="position:absolute;left:524.70px;top:140.30px;width:8.60px;height:8.50px;background:#fdfdfd;border-top:0.8px solid #b9c3cc;box-sizing:border-box"></div>
<svg style="position:absolute;left:527.20px;top:143.40px;overflow:visible" width="3.6" height="2.4" viewBox="0 0 3.6 2.4"><path d="M0.1 0.1 L1.8 2.2 L3.5 0.1Z" fill="#222"/></svg>
<div style="position:absolute;left:533.50px;top:139.60px;width:40.70px;height:10.00px;background:#1e5a8a"></div>
<div style="position:absolute;left:533.50px;top:139.60px;width:31.90px;height:10.00px;overflow:hidden">
<div dir="rtl" style="position:absolute;right:0.40px;text-align:right;top:1.65px;font-size:6.00px;line-height:7.50px;color:#ffffff;font-weight:bold;white-space:nowrap;-webkit-text-stroke:0.1px #ffffff;transform:scaleX(0.9924);transform-origin:right center;">ار اعطل</div>
</div>
<div style="position:absolute;left:565.40px;top:140.30px;width:8.60px;height:8.50px;background:#fdfdfd;border-top:0.8px solid #b9c3cc;box-sizing:border-box"></div>
<svg style="position:absolute;left:567.90px;top:143.40px;overflow:visible" width="3.6" height="2.4" viewBox="0 0 3.6 2.4"><path d="M0.1 0.1 L1.8 2.2 L3.5 0.1Z" fill="#222"/></svg>
<div style="position:absolute;left:574.20px;top:139.60px;width:73.10px;height:10.00px;background:#0b416f"></div>
<div style="position:absolute;left:574.20px;top:139.60px;width:64.30px;height:10.00px;overflow:hidden">
<div style="position:absolute;left:1.40px;top:1.05px;font-size:7.60px;line-height:9.50px;color:#ffffff;font-weight:bold;white-space:nowrap;-webkit-text-stroke:0.1px #ffffff;transform:scaleX(0.8713);transform-origin:left center;">Final Responcibility</div>
</div>
<div style="position:absolute;left:638.50px;top:140.30px;width:8.60px;height:8.50px;background:#fdfdfd;border-top:0.8px solid #b9c3cc;box-sizing:border-box"></div>
<svg style="position:absolute;left:641.00px;top:143.40px;overflow:visible" width="3.6" height="2.4" viewBox="0 0 3.6 2.4"><path d="M0.1 0.1 L1.8 2.2 L3.5 0.1Z" fill="#222"/></svg>
<div style="position:absolute;left:647.30px;top:139.60px;width:33.70px;height:10.00px;background:#1e5a8a"></div>
<div style="position:absolute;left:647.30px;top:139.60px;width:24.90px;height:10.00px;overflow:hidden">
<div dir="rtl" style="position:absolute;right:-0.30px;text-align:right;top:1.65px;font-size:6.00px;line-height:7.50px;color:#ffffff;font-weight:bold;white-space:nowrap;-webkit-text-stroke:0.1px #ffffff;transform:scaleX(1.0000);transform-origin:right center;">تشيف</div>
</div>
<div style="position:absolute;left:672.20px;top:140.30px;width:8.60px;height:8.50px;background:#fdfdfd;border-top:0.8px solid #b9c3cc;box-sizing:border-box"></div>
<svg style="position:absolute;left:674.70px;top:143.40px;overflow:visible" width="3.6" height="2.4" viewBox="0 0 3.6 2.4"><path d="M0.1 0.1 L1.8 2.2 L3.5 0.1Z" fill="#222"/></svg>
<div style="position:absolute;left:681.00px;top:139.60px;width:34.00px;height:10.00px;background:#1e5a8a"></div>
<div style="position:absolute;left:681.00px;top:139.60px;width:25.20px;height:10.00px;overflow:hidden">
<div dir="rtl" style="position:absolute;right:0.20px;text-align:right;top:1.65px;font-size:6.00px;line-height:7.50px;color:#ffffff;font-weight:bold;white-space:nowrap;-webkit-text-stroke:0.1px #ffffff;transform:scaleX(1.1136);transform-origin:right center;">حص</div>
</div>
<div style="position:absolute;left:706.20px;top:140.30px;width:8.60px;height:8.50px;background:#fdfdfd;border-top:0.8px solid #b9c3cc;box-sizing:border-box"></div>
<svg style="position:absolute;left:708.70px;top:143.40px;overflow:visible" width="3.6" height="2.4" viewBox="0 0 3.6 2.4"><path d="M0.1 0.1 L1.8 2.2 L3.5 0.1Z" fill="#222"/></svg>
<div style="position:absolute;left:6.70px;top:150.40px;width:70.30px;height:29.10px;overflow:hidden">
<div dir="rtl" style="position:absolute;right:0.20px;text-align:right;top:20.60px;font-size:6.40px;line-height:8.00px;color:#000000;font-weight:normal;white-space:nowrap;-webkit-text-stroke:0.1px #000000;transform:scaleX(0.9945);transform-origin:right center;-webkit-text-stroke:0.25px #000">بلاغات عادية</div>
</div>
<div style="position:absolute;left:168.00px;top:150.40px;width:53.50px;height:29.10px;overflow:hidden">
<div style="position:absolute;left:1.70px;top:21.42px;font-size:7.00px;line-height:8.75px;color:#000000;font-weight:normal;white-space:nowrap;-webkit-text-stroke:0.1px #000000;transform:scaleX(0.9577);transform-origin:left center;-webkit-text-stroke:0.3px #000">Open</div>
</div>
<div style="position:absolute;left:357.00px;top:150.40px;width:49.00px;height:29.10px;overflow:hidden">
<div dir="rtl" style="position:absolute;right:0.40px;text-align:right;top:20.60px;font-size:6.40px;line-height:8.00px;color:#000000;font-weight:normal;white-space:nowrap;-webkit-text-stroke:0.1px #000000;transform:scaleX(0.9121);transform-origin:right center;-webkit-text-stroke:0.25px #000">مناطق عادية</div>
</div>
<div style="position:absolute;left:6.70px;top:179.50px;width:70.30px;height:10.80px;overflow:hidden">
<div dir="rtl" style="position:absolute;right:0.20px;text-align:right;top:1.70px;font-size:6.40px;line-height:8.00px;color:#000000;font-weight:normal;white-space:nowrap;-webkit-text-stroke:0.1px #000000;transform:scaleX(0.9945);transform-origin:right center;-webkit-text-stroke:0.25px #000">بلاغات عادية</div>
</div>
<div style="position:absolute;left:168.00px;top:179.50px;width:53.50px;height:10.80px;overflow:hidden">
<div style="position:absolute;left:1.70px;top:2.53px;font-size:7.00px;line-height:8.75px;color:#000000;font-weight:normal;white-space:nowrap;-webkit-text-stroke:0.1px #000000;transform:scaleX(0.9577);transform-origin:left center;-webkit-text-stroke:0.3px #000">Open</div>
</div>
<div style="position:absolute;left:357.00px;top:179.50px;width:49.00px;height:10.80px;overflow:hidden">
<div dir="rtl" style="position:absolute;right:0.40px;text-align:right;top:1.70px;font-size:6.40px;line-height:8.00px;color:#000000;font-weight:normal;white-space:nowrap;-webkit-text-stroke:0.1px #000000;transform:scaleX(0.9121);transform-origin:right center;-webkit-text-stroke:0.25px #000">مناطق عادية</div>
</div>
<div style="position:absolute;left:6.70px;top:190.30px;width:70.30px;height:9.90px;overflow:hidden">
<div dir="rtl" style="position:absolute;right:0.20px;text-align:right;top:0.90px;font-size:6.40px;line-height:8.00px;color:#000000;font-weight:normal;white-space:nowrap;-webkit-text-stroke:0.1px #000000;transform:scaleX(0.9945);transform-origin:right center;-webkit-text-stroke:0.25px #000">بلاغات عادية</div>
</div>
<div style="position:absolute;left:168.00px;top:190.30px;width:53.50px;height:9.90px;overflow:hidden">
<div style="position:absolute;left:1.70px;top:1.72px;font-size:7.00px;line-height:8.75px;color:#000000;font-weight:normal;white-space:nowrap;-webkit-text-stroke:0.1px #000000;transform:scaleX(0.9577);transform-origin:left center;-webkit-text-stroke:0.3px #000">Open</div>
</div>
<div style="position:absolute;left:357.00px;top:190.30px;width:49.00px;height:9.90px;overflow:hidden">
<div dir="rtl" style="position:absolute;right:0.40px;text-align:right;top:0.90px;font-size:6.40px;line-height:8.00px;color:#000000;font-weight:normal;white-space:nowrap;-webkit-text-stroke:0.1px #000000;transform:scaleX(0.9121);transform-origin:right center;-webkit-text-stroke:0.25px #000">مناطق عادية</div>
</div>
<div style="position:absolute;left:6.70px;top:200.20px;width:70.30px;height:10.40px;overflow:hidden">
<div dir="rtl" style="position:absolute;right:0.20px;text-align:right;top:0.70px;font-size:6.40px;line-height:8.00px;color:#000000;font-weight:normal;white-space:nowrap;-webkit-text-stroke:0.1px #000000;transform:scaleX(0.9945);transform-origin:right center;-webkit-text-stroke:0.25px #000">بلاغات عادية</div>
</div>
<div style="position:absolute;left:168.00px;top:200.20px;width:53.50px;height:10.40px;overflow:hidden">
<div style="position:absolute;left:1.70px;top:1.53px;font-size:7.00px;line-height:8.75px;color:#000000;font-weight:normal;white-space:nowrap;-webkit-text-stroke:0.1px #000000;transform:scaleX(0.9577);transform-origin:left center;-webkit-text-stroke:0.3px #000">Open</div>
</div>
<div style="position:absolute;left:357.00px;top:200.20px;width:49.00px;height:10.40px;overflow:hidden">
<div dir="rtl" style="position:absolute;right:0.40px;text-align:right;top:0.70px;font-size:6.40px;line-height:8.00px;color:#000000;font-weight:normal;white-space:nowrap;-webkit-text-stroke:0.1px #000000;transform:scaleX(0.9121);transform-origin:right center;-webkit-text-stroke:0.25px #000">مناطق عادية</div>
</div>
<div style="position:absolute;left:6.70px;top:210.60px;width:70.30px;height:100.70px;overflow:hidden">
<div dir="rtl" style="position:absolute;right:0.20px;text-align:right;top:91.90px;font-size:6.40px;line-height:8.00px;color:#000000;font-weight:normal;white-space:nowrap;-webkit-text-stroke:0.1px #000000;transform:scaleX(0.9945);transform-origin:right center;-webkit-text-stroke:0.25px #000">بلاغات عادية</div>
</div>
<div style="position:absolute;left:168.00px;top:210.60px;width:53.50px;height:100.70px;overflow:hidden">
<div style="position:absolute;left:1.70px;top:92.72px;font-size:7.00px;line-height:8.75px;color:#000000;font-weight:normal;white-space:nowrap;-webkit-text-stroke:0.1px #000000;transform:scaleX(0.9577);transform-origin:left center;-webkit-text-stroke:0.3px #000">Open</div>
</div>
<div style="position:absolute;left:357.00px;top:210.60px;width:49.00px;height:100.70px;overflow:hidden">
<div dir="rtl" style="position:absolute;right:0.40px;text-align:right;top:91.90px;font-size:6.40px;line-height:8.00px;color:#000000;font-weight:normal;white-space:nowrap;-webkit-text-stroke:0.1px #000000;transform:scaleX(0.9121);transform-origin:right center;-webkit-text-stroke:0.25px #000">مناطق عادية</div>
</div>
<div style="position:absolute;left:6.70px;top:311.30px;width:70.30px;height:10.20px;overflow:hidden">
<div dir="rtl" style="position:absolute;right:0.20px;text-align:right;top:1.50px;font-size:6.40px;line-height:8.00px;color:#000000;font-weight:normal;white-space:nowrap;-webkit-text-stroke:0.1px #000000;transform:scaleX(0.9945);transform-origin:right center;-webkit-text-stroke:0.25px #000">بلاغات عادية</div>
</div>
<div style="position:absolute;left:168.00px;top:311.30px;width:53.50px;height:10.20px;overflow:hidden">
<div style="position:absolute;left:1.70px;top:2.32px;font-size:7.00px;line-height:8.75px;color:#000000;font-weight:normal;white-space:nowrap;-webkit-text-stroke:0.1px #000000;transform:scaleX(0.9577);transform-origin:left center;-webkit-text-stroke:0.3px #000">Open</div>
</div>
<div style="position:absolute;left:357.00px;top:311.30px;width:49.00px;height:10.20px;overflow:hidden">
<div dir="rtl" style="position:absolute;right:0.40px;text-align:right;top:1.50px;font-size:6.40px;line-height:8.00px;color:#000000;font-weight:normal;white-space:nowrap;-webkit-text-stroke:0.1px #000000;transform:scaleX(0.9121);transform-origin:right center;-webkit-text-stroke:0.25px #000">مناطق عادية</div>
</div>
<div style="position:absolute;left:6.70px;top:321.50px;width:70.30px;height:9.90px;overflow:hidden">
<div dir="rtl" style="position:absolute;right:0.20px;text-align:right;top:1.00px;font-size:6.40px;line-height:8.00px;color:#000000;font-weight:normal;white-space:nowrap;-webkit-text-stroke:0.1px #000000;transform:scaleX(0.9945);transform-origin:right center;-webkit-text-stroke:0.25px #000">بلاغات عادية</div>
</div>
<div style="position:absolute;left:168.00px;top:321.50px;width:53.50px;height:9.90px;overflow:hidden">
<div style="position:absolute;left:1.70px;top:1.82px;font-size:7.00px;line-height:8.75px;color:#000000;font-weight:normal;white-space:nowrap;-webkit-text-stroke:0.1px #000000;transform:scaleX(0.9577);transform-origin:left center;-webkit-text-stroke:0.3px #000">Open</div>
</div>
<div style="position:absolute;left:357.00px;top:321.50px;width:49.00px;height:9.90px;overflow:hidden">
<div dir="rtl" style="position:absolute;right:0.40px;text-align:right;top:1.00px;font-size:6.40px;line-height:8.00px;color:#000000;font-weight:normal;white-space:nowrap;-webkit-text-stroke:0.1px #000000;transform:scaleX(0.9121);transform-origin:right center;-webkit-text-stroke:0.25px #000">مناطق عادية</div>
</div>
<div style="position:absolute;left:6.70px;top:331.40px;width:70.30px;height:30.90px;overflow:hidden">
<div dir="rtl" style="position:absolute;right:0.20px;text-align:right;top:21.20px;font-size:6.40px;line-height:8.00px;color:#000000;font-weight:normal;white-space:nowrap;-webkit-text-stroke:0.1px #000000;transform:scaleX(0.9945);transform-origin:right center;-webkit-text-stroke:0.25px #000">بلاغات عادية</div>
</div>
<div style="position:absolute;left:168.00px;top:331.40px;width:53.50px;height:30.90px;overflow:hidden">
<div style="position:absolute;left:1.70px;top:22.03px;font-size:7.00px;line-height:8.75px;color:#000000;font-weight:normal;white-space:nowrap;-webkit-text-stroke:0.1px #000000;transform:scaleX(0.9577);transform-origin:left center;-webkit-text-stroke:0.3px #000">Open</div>
</div>
<div style="position:absolute;left:357.00px;top:331.40px;width:49.00px;height:30.90px;overflow:hidden">
<div dir="rtl" style="position:absolute;right:0.40px;text-align:right;top:21.20px;font-size:6.40px;line-height:8.00px;color:#000000;font-weight:normal;white-space:nowrap;-webkit-text-stroke:0.1px #000000;transform:scaleX(0.9121);transform-origin:right center;-webkit-text-stroke:0.25px #000">مناطق عادية</div>
</div>
<div style="position:absolute;left:6.70px;top:362.30px;width:70.30px;height:9.70px;overflow:hidden">
<div dir="rtl" style="position:absolute;right:0.20px;text-align:right;top:0.50px;font-size:6.40px;line-height:8.00px;color:#000000;font-weight:normal;white-space:nowrap;-webkit-text-stroke:0.1px #000000;transform:scaleX(0.9945);transform-origin:right center;-webkit-text-stroke:0.25px #000">بلاغات عادية</div>
</div>
<div style="position:absolute;left:168.00px;top:362.30px;width:53.50px;height:9.70px;overflow:hidden">
<div style="position:absolute;left:1.70px;top:1.32px;font-size:7.00px;line-height:8.75px;color:#000000;font-weight:normal;white-space:nowrap;-webkit-text-stroke:0.1px #000000;transform:scaleX(0.9577);transform-origin:left center;-webkit-text-stroke:0.3px #000">Open</div>
</div>
<div style="position:absolute;left:357.00px;top:362.30px;width:49.00px;height:9.70px;overflow:hidden">
<div dir="rtl" style="position:absolute;right:0.40px;text-align:right;top:0.50px;font-size:6.40px;line-height:8.00px;color:#000000;font-weight:normal;white-space:nowrap;-webkit-text-stroke:0.1px #000000;transform:scaleX(0.9121);transform-origin:right center;-webkit-text-stroke:0.25px #000">مناطق عادية</div>
</div>
<div style="position:absolute;left:6.70px;top:372.00px;width:70.30px;height:10.10px;overflow:hidden">
<div dir="rtl" style="position:absolute;right:0.20px;text-align:right;top:1.30px;font-size:6.40px;line-height:8.00px;color:#000000;font-weight:normal;white-space:nowrap;-webkit-text-stroke:0.1px #000000;transform:scaleX(0.9945);transform-origin:right center;-webkit-text-stroke:0.25px #000">بلاغات عادية</div>
</div>
<div style="position:absolute;left:168.00px;top:372.00px;width:53.50px;height:10.10px;overflow:hidden">
<div style="position:absolute;left:1.70px;top:2.12px;font-size:7.00px;line-height:8.75px;color:#000000;font-weight:normal;white-space:nowrap;-webkit-text-stroke:0.1px #000000;transform:scaleX(0.9577);transform-origin:left center;-webkit-text-stroke:0.3px #000">Open</div>
</div>
<div style="position:absolute;left:357.00px;top:372.00px;width:49.00px;height:10.10px;overflow:hidden">
<div dir="rtl" style="position:absolute;right:0.40px;text-align:right;top:1.30px;font-size:6.40px;line-height:8.00px;color:#000000;font-weight:normal;white-space:nowrap;-webkit-text-stroke:0.1px #000000;transform:scaleX(0.9121);transform-origin:right center;-webkit-text-stroke:0.25px #000">مناطق عادية</div>
</div>
<div style="position:absolute;left:406.00px;top:150.40px;width:168.20px;height:29.10px;overflow:hidden">
<div dir="rtl" style="position:absolute;right:0.90px;text-align:right;top:20.60px;font-size:6.40px;line-height:8.00px;color:#000000;font-weight:normal;white-space:nowrap;-webkit-text-stroke:0.1px #000000;transform:scaleX(0.9559);transform-origin:right center;-webkit-text-stroke:0.25px #000">تكرار أعطال حا مدن القناة (شاعر)</div>
</div>
<div style="position:absolute;left:406.00px;top:179.50px;width:168.20px;height:10.80px;overflow:hidden">
<div dir="rtl" style="position:absolute;right:0.90px;text-align:right;top:1.70px;font-size:6.40px;line-height:8.00px;color:#000000;font-weight:normal;white-space:nowrap;-webkit-text-stroke:0.1px #000000;transform:scaleX(0.9559);transform-origin:right center;-webkit-text-stroke:0.25px #000">تكرار أعطال حا مدن القناة (شاعر)</div>
</div>
<div style="position:absolute;left:406.00px;top:190.30px;width:168.20px;height:9.90px;overflow:hidden">
<div dir="rtl" style="position:absolute;right:0.90px;text-align:right;top:0.90px;font-size:6.40px;line-height:8.00px;color:#000000;font-weight:normal;white-space:nowrap;-webkit-text-stroke:0.1px #000000;transform:scaleX(0.9673);transform-origin:right center;-webkit-text-stroke:0.25px #000">تكرار أعطال حا وسط القاهرة (حسن حجاج)</div>
</div>
<div style="position:absolute;left:406.00px;top:200.20px;width:168.20px;height:10.40px;overflow:hidden">
<div dir="rtl" style="position:absolute;right:0.90px;text-align:right;top:0.70px;font-size:6.40px;line-height:8.00px;color:#000000;font-weight:normal;white-space:nowrap;-webkit-text-stroke:0.1px #000000;transform:scaleX(0.9812);transform-origin:right center;-webkit-text-stroke:0.25px #000">تكرار أعطال حا شرق القاهرة (محمد ابراهيم)</div>
</div>
<div style="position:absolute;left:406.00px;top:210.60px;width:168.20px;height:100.70px;overflow:hidden">
<div dir="rtl" style="position:absolute;right:0.90px;text-align:right;top:91.90px;font-size:6.40px;line-height:8.00px;color:#000000;font-weight:normal;white-space:nowrap;-webkit-text-stroke:0.1px #000000;transform:scaleX(0.9706);transform-origin:right center;-webkit-text-stroke:0.25px #000">تكرار أعطال حا شرق القاهرة (محمد ابراهيم)</div>
</div>
<div style="position:absolute;left:406.00px;top:311.30px;width:168.20px;height:10.20px;overflow:hidden">
<div dir="rtl" style="position:absolute;right:0.90px;text-align:right;top:1.50px;font-size:6.40px;line-height:8.00px;color:#000000;font-weight:normal;white-space:nowrap;-webkit-text-stroke:0.1px #000000;transform:scaleX(0.9880);transform-origin:right center;-webkit-text-stroke:0.25px #000">تكرار أعطال حا شرق اسكندرية (محمد انور)</div>
</div>
<div style="position:absolute;left:406.00px;top:321.50px;width:168.20px;height:9.90px;overflow:hidden">
<div dir="rtl" style="position:absolute;right:0.90px;text-align:right;top:1.00px;font-size:6.40px;line-height:8.00px;color:#000000;font-weight:normal;white-space:nowrap;-webkit-text-stroke:0.1px #000000;transform:scaleX(0.9880);transform-origin:right center;-webkit-text-stroke:0.25px #000">تكرار أعطال حا شرق اسكندرية (محمد انور)</div>
</div>
<div style="position:absolute;left:406.00px;top:331.40px;width:168.20px;height:30.90px;overflow:hidden">
<div dir="rtl" style="position:absolute;right:0.90px;text-align:right;top:21.20px;font-size:6.40px;line-height:8.00px;color:#000000;font-weight:normal;white-space:nowrap;-webkit-text-stroke:0.1px #000000;transform:scaleX(0.9897);transform-origin:right center;-webkit-text-stroke:0.25px #000">تكرار أعطال حا وسط الدلتا  (محمد السحاوى )</div>
</div>
<div style="position:absolute;left:406.00px;top:362.30px;width:168.20px;height:9.70px;overflow:hidden">
<div dir="rtl" style="position:absolute;right:0.90px;text-align:right;top:0.50px;font-size:6.40px;line-height:8.00px;color:#000000;font-weight:normal;white-space:nowrap;-webkit-text-stroke:0.1px #000000;transform:scaleX(0.9869);transform-origin:right center;-webkit-text-stroke:0.25px #000">تكرار أعطال حا التجمعات (محمد فرغلى)</div>
</div>
<div style="position:absolute;left:406.00px;top:372.00px;width:168.20px;height:10.10px;overflow:hidden">
<div dir="rtl" style="position:absolute;right:0.90px;text-align:right;top:1.30px;font-size:6.40px;line-height:8.00px;color:#000000;font-weight:normal;white-space:nowrap;-webkit-text-stroke:0.1px #000000;transform:scaleX(0.9869);transform-origin:right center;-webkit-text-stroke:0.25px #000">تكرار أعطال حا التجمعات (محمد فرغلى)</div>
</div>
<div style="position:absolute;left:574.20px;top:150.40px;width:73.10px;height:29.10px;overflow:hidden">
<div dir="rtl" style="position:absolute;right:1.10px;text-align:right;top:20.60px;font-size:6.40px;line-height:8.00px;color:#000000;font-weight:normal;white-space:nowrap;-webkit-text-stroke:0.1px #000000;transform:scaleX(0.9556);transform-origin:right center;-webkit-text-stroke:0.25px #000">المحلية</div>
</div>
<div style="position:absolute;left:574.20px;top:179.50px;width:73.10px;height:10.80px;overflow:hidden">
<div dir="rtl" style="position:absolute;right:1.10px;text-align:right;top:1.70px;font-size:6.40px;line-height:8.00px;color:#000000;font-weight:normal;white-space:nowrap;-webkit-text-stroke:0.1px #000000;transform:scaleX(0.9133);transform-origin:right center;-webkit-text-stroke:0.25px #000">سحب</div>
</div>
<div style="position:absolute;left:574.20px;top:190.30px;width:73.10px;height:9.90px;overflow:hidden">
<div dir="rtl" style="position:absolute;right:1.10px;text-align:right;top:0.90px;font-size:6.40px;line-height:8.00px;color:#000000;font-weight:normal;white-space:nowrap;-webkit-text-stroke:0.1px #000000;transform:scaleX(1.0000);transform-origin:right center;-webkit-text-stroke:0.25px #000">توريد</div>
</div>
<div style="position:absolute;left:574.20px;top:200.20px;width:73.10px;height:10.40px;overflow:hidden">
<div dir="rtl" style="position:absolute;right:1.10px;text-align:right;top:0.70px;font-size:6.40px;line-height:8.00px;color:#000000;font-weight:normal;white-space:nowrap;-webkit-text-stroke:0.1px #000000;transform:scaleX(0.9556);transform-origin:right center;-webkit-text-stroke:0.25px #000">المحلية</div>
</div>
<div style="position:absolute;left:574.20px;top:210.60px;width:73.10px;height:100.70px;overflow:hidden">
<div dir="rtl" style="position:absolute;right:1.10px;text-align:right;top:91.90px;font-size:6.40px;line-height:8.00px;color:#000000;font-weight:normal;white-space:nowrap;-webkit-text-stroke:0.1px #000000;transform:scaleX(0.9556);transform-origin:right center;-webkit-text-stroke:0.25px #000">المحلية</div>
</div>
<div style="position:absolute;left:574.20px;top:311.30px;width:73.10px;height:10.20px;overflow:hidden">
<div dir="rtl" style="position:absolute;right:1.10px;text-align:right;top:1.50px;font-size:6.40px;line-height:8.00px;color:#000000;font-weight:normal;white-space:nowrap;-webkit-text-stroke:0.1px #000000;transform:scaleX(0.9921);transform-origin:right center;-webkit-text-stroke:0.25px #000">تحت المراجعة</div>
</div>
<div style="position:absolute;left:574.20px;top:321.50px;width:73.10px;height:9.90px;overflow:hidden">
<div dir="rtl" style="position:absolute;right:1.10px;text-align:right;top:1.00px;font-size:6.40px;line-height:8.00px;color:#000000;font-weight:normal;white-space:nowrap;-webkit-text-stroke:0.1px #000000;transform:scaleX(0.9556);transform-origin:right center;-webkit-text-stroke:0.25px #000">المحلية</div>
</div>
<div style="position:absolute;left:574.20px;top:331.40px;width:73.10px;height:30.90px;overflow:hidden">
<div dir="rtl" style="position:absolute;right:1.10px;text-align:right;top:21.20px;font-size:6.40px;line-height:8.00px;color:#000000;font-weight:normal;white-space:nowrap;-webkit-text-stroke:0.1px #000000;transform:scaleX(1.0000);transform-origin:right center;-webkit-text-stroke:0.25px #000">توريد</div>
</div>
<div style="position:absolute;left:574.20px;top:362.30px;width:73.10px;height:9.70px;overflow:hidden">
<div dir="rtl" style="position:absolute;right:1.10px;text-align:right;top:0.50px;font-size:6.40px;line-height:8.00px;color:#000000;font-weight:normal;white-space:nowrap;-webkit-text-stroke:0.1px #000000;transform:scaleX(0.9133);transform-origin:right center;-webkit-text-stroke:0.25px #000">سحب</div>
</div>
<div style="position:absolute;left:574.20px;top:372.00px;width:73.10px;height:10.10px;overflow:hidden">
<div dir="rtl" style="position:absolute;right:1.10px;text-align:right;top:1.30px;font-size:6.40px;line-height:8.00px;color:#000000;font-weight:normal;white-space:nowrap;-webkit-text-stroke:0.1px #000000;transform:scaleX(0.9133);transform-origin:right center;-webkit-text-stroke:0.25px #000">سحب</div>
</div>
<div style="position:absolute;left:647.30px;top:150.40px;width:67.70px;height:29.10px;overflow:hidden">
<div dir="rtl" style="position:absolute;right:0.80px;text-align:right;top:20.60px;font-size:6.40px;line-height:8.00px;color:#000000;font-weight:normal;white-space:nowrap;-webkit-text-stroke:0.1px #000000;transform:scaleX(1.0064);transform-origin:right center;-webkit-text-stroke:0.25px #000">الجهاز به تشوقطع عيار</div>
</div>
<div style="position:absolute;left:647.30px;top:179.50px;width:67.70px;height:10.80px;overflow:hidden">
<div dir="rtl" style="position:absolute;right:0.80px;text-align:right;top:1.70px;font-size:6.40px;line-height:8.00px;color:#000000;font-weight:normal;white-space:nowrap;-webkit-text-stroke:0.1px #000000;transform:scaleX(0.9964);transform-origin:right center;-webkit-text-stroke:0.25px #000">الجهاز به خطمتنح</div>
</div>
<div style="position:absolute;left:647.30px;top:190.30px;width:67.70px;height:9.90px;overflow:hidden">
<div dir="rtl" style="position:absolute;right:0.80px;text-align:right;top:0.90px;font-size:6.40px;line-height:8.00px;color:#000000;font-weight:normal;white-space:nowrap;-webkit-text-stroke:0.1px #000000;transform:scaleX(0.9431);transform-origin:right center;-webkit-text-stroke:0.25px #000">تم اصلاح الجحصيل</div>
</div>
<div style="position:absolute;left:647.30px;top:200.20px;width:67.70px;height:10.40px;overflow:hidden">
<div dir="rtl" style="position:absolute;right:0.80px;text-align:right;top:0.70px;font-size:6.40px;line-height:8.00px;color:#000000;font-weight:normal;white-space:nowrap;-webkit-text-stroke:0.1px #000000;transform:scaleX(0.9707);transform-origin:right center;-webkit-text-stroke:0.25px #000">الجهاز به حتحصيل</div>
</div>
<div style="position:absolute;left:647.30px;top:210.60px;width:67.70px;height:100.70px;overflow:hidden">
<div dir="rtl" style="position:absolute;right:0.80px;text-align:right;top:91.90px;font-size:6.40px;line-height:8.00px;color:#000000;font-weight:normal;white-space:nowrap;-webkit-text-stroke:0.1px #000000;transform:scaleX(1.0117);transform-origin:right center;-webkit-text-stroke:0.25px #000">الزيارة الاولىقطع عيار</div>
</div>
<div style="position:absolute;left:647.30px;top:311.30px;width:67.70px;height:10.20px;overflow:hidden">
<div dir="rtl" style="position:absolute;right:0.80px;text-align:right;top:1.50px;font-size:6.40px;line-height:8.00px;color:#000000;font-weight:normal;white-space:nowrap;-webkit-text-stroke:0.1px #000000;transform:scaleX(1.0593);transform-origin:right center;-webkit-text-stroke:0.25px #000">الزيارة الاولىفني</div>
</div>
<div style="position:absolute;left:647.30px;top:321.50px;width:67.70px;height:9.90px;overflow:hidden">
<div dir="rtl" style="position:absolute;right:0.80px;text-align:right;top:1.00px;font-size:6.40px;line-height:8.00px;color:#000000;font-weight:normal;white-space:nowrap;-webkit-text-stroke:0.1px #000000;transform:scaleX(0.9876);transform-origin:right center;-webkit-text-stroke:0.25px #000">الزيارة الاولىحصيل</div>
</div>
<div style="position:absolute;left:647.30px;top:331.40px;width:67.70px;height:30.90px;overflow:hidden">
<div dir="rtl" style="position:absolute;right:0.80px;text-align:right;top:21.20px;font-size:6.40px;line-height:8.00px;color:#000000;font-weight:normal;white-space:nowrap;-webkit-text-stroke:0.1px #000000;transform:scaleX(1.0593);transform-origin:right center;-webkit-text-stroke:0.25px #000">الزيارة الاولىفني</div>
</div>
<div style="position:absolute;left:647.30px;top:362.30px;width:67.70px;height:9.70px;overflow:hidden">
<div dir="rtl" style="position:absolute;right:0.80px;text-align:right;top:0.50px;font-size:6.40px;line-height:8.00px;color:#000000;font-weight:normal;white-space:nowrap;-webkit-text-stroke:0.1px #000000;transform:scaleX(1.0483);transform-origin:right center;-webkit-text-stroke:0.25px #000">الزيارة الاولىمنتج</div>
</div>
<div style="position:absolute;left:647.30px;top:372.00px;width:67.70px;height:10.10px;overflow:hidden">
<div dir="rtl" style="position:absolute;right:0.80px;text-align:right;top:1.30px;font-size:6.40px;line-height:8.00px;color:#000000;font-weight:normal;white-space:nowrap;-webkit-text-stroke:0.1px #000000;transform:scaleX(1.0483);transform-origin:right center;-webkit-text-stroke:0.25px #000">الزيارة الاولىمنتج</div>
</div>
<div style="position:absolute;left:221.50px;top:179.50px;width:40.50px;height:10.80px;overflow:hidden">
<div style="position:absolute;left:1.00px;top:1.93px;font-size:7.00px;line-height:8.75px;color:#000000;font-weight:normal;white-space:nowrap;-webkit-text-stroke:0.1px #000000;transform:scaleX(0.9834);transform-origin:left center;-webkit-text-stroke:0.3px #000">TV-1174193</div>
</div>
<div style="position:absolute;left:221.50px;top:210.60px;width:40.50px;height:100.70px;overflow:hidden">
<div style="position:absolute;left:1.50px;top:2.22px;font-size:7.00px;line-height:8.75px;color:#000000;font-weight:normal;white-space:nowrap;-webkit-text-stroke:0.1px #000000;transform:scaleX(0.9326);transform-origin:left center;-webkit-text-stroke:0.3px #000">7741-</div>
</div>
<div style="position:absolute;left:221.50px;top:210.60px;width:40.50px;height:100.70px;overflow:hidden">
<div style="position:absolute;left:1.50px;top:12.12px;font-size:7.00px;line-height:8.75px;color:#000000;font-weight:normal;white-space:nowrap;-webkit-text-stroke:0.1px #000000;transform:scaleX(0.9532);transform-origin:left center;-webkit-text-stroke:0.3px #000">955000-</div>
</div>
<div style="position:absolute;left:221.50px;top:210.60px;width:40.50px;height:100.70px;overflow:hidden">
<div style="position:absolute;left:1.50px;top:22.03px;font-size:7.00px;line-height:8.75px;color:#000000;font-weight:normal;white-space:nowrap;-webkit-text-stroke:0.1px #000000;transform:scaleX(0.8626);transform-origin:left center;-webkit-text-stroke:0.3px #000">6380يتم</div>
</div>
<div style="position:absolute;left:221.50px;top:210.60px;width:40.50px;height:100.70px;overflow:hidden">
<div style="position:absolute;left:1.50px;top:31.92px;font-size:7.00px;line-height:8.75px;color:#000000;font-weight:normal;white-space:nowrap;-webkit-text-stroke:0.1px #000000;transform:scaleX(0.7643);transform-origin:left center;-webkit-text-stroke:0.3px #000">التحويل للدعم</div>
</div>
<div style="position:absolute;left:221.50px;top:210.60px;width:40.50px;height:100.70px;overflow:hidden">
<div style="position:absolute;left:1.50px;top:41.83px;font-size:7.00px;line-height:8.75px;color:#000000;font-weight:normal;white-space:nowrap;-webkit-text-stroke:0.1px #000000;transform:scaleX(0.7834);transform-origin:left center;-webkit-text-stroke:0.3px #000">الفني للسحب</div>
</div>
<div style="position:absolute;left:221.50px;top:210.60px;width:40.50px;height:100.70px;overflow:hidden">
<div style="position:absolute;left:1.50px;top:51.72px;font-size:7.00px;line-height:8.75px;color:#000000;font-weight:normal;white-space:nowrap;-webkit-text-stroke:0.1px #000000;transform:scaleX(0.9326);transform-origin:left center;-webkit-text-stroke:0.3px #000">7741-</div>
</div>
<div style="position:absolute;left:221.50px;top:210.60px;width:40.50px;height:100.70px;overflow:hidden">
<div style="position:absolute;left:1.50px;top:61.62px;font-size:7.00px;line-height:8.75px;color:#000000;font-weight:normal;white-space:nowrap;-webkit-text-stroke:0.1px #000000;transform:scaleX(0.9532);transform-origin:left center;-webkit-text-stroke:0.3px #000">955000-</div>
</div>
<div style="position:absolute;left:221.50px;top:210.60px;width:40.50px;height:100.70px;overflow:hidden">
<div style="position:absolute;left:1.50px;top:71.53px;font-size:7.00px;line-height:8.75px;color:#000000;font-weight:normal;white-space:nowrap;-webkit-text-stroke:0.1px #000000;transform:scaleX(0.8626);transform-origin:left center;-webkit-text-stroke:0.3px #000">5350يتم</div>
</div>
<div style="position:absolute;left:221.50px;top:210.60px;width:40.50px;height:100.70px;overflow:hidden">
<div style="position:absolute;left:1.50px;top:81.42px;font-size:7.00px;line-height:8.75px;color:#000000;font-weight:normal;white-space:nowrap;-webkit-text-stroke:0.1px #000000;transform:scaleX(0.7643);transform-origin:left center;-webkit-text-stroke:0.3px #000">التحويل للدعم</div>
</div>
<div style="position:absolute;left:221.50px;top:210.60px;width:40.50px;height:100.70px;overflow:hidden">
<div style="position:absolute;left:1.50px;top:91.33px;font-size:7.00px;line-height:8.75px;color:#000000;font-weight:normal;white-space:nowrap;-webkit-text-stroke:0.1px #000000;transform:scaleX(0.7834);transform-origin:left center;-webkit-text-stroke:0.3px #000">الفني للسحب</div>
</div>
<div style="position:absolute;left:262.00px;top:150.40px;width:95.00px;height:29.10px;overflow:hidden">
<div dir="rtl" style="position:absolute;right:0.80px;text-align:right;top:0.90px;font-size:6.40px;line-height:8.00px;color:#000000;font-weight:normal;white-space:nowrap;-webkit-text-stroke:0.1px #000000;transform:scaleX(1.0078);transform-origin:right center;-webkit-text-stroke:0.25px #000">يتم السحب للتفحص والاصلاح</div>
</div>
<div style="position:absolute;left:262.00px;top:150.40px;width:95.00px;height:29.10px;overflow:hidden">
<div dir="rtl" style="position:absolute;right:2.40px;text-align:right;top:10.60px;font-size:6.40px;line-height:8.00px;color:#000000;font-weight:normal;white-space:nowrap;-webkit-text-stroke:0.1px #000000;transform:scaleX(0.9846);transform-origin:right center;-webkit-text-stroke:0.25px #000">/ضمان من الباركود</div>
</div>
<div style="position:absolute;left:262.00px;top:150.40px;width:95.00px;height:29.10px;overflow:hidden">
<div dir="rtl" style="position:absolute;right:1.00px;text-align:right;top:20.30px;font-size:6.40px;line-height:8.00px;color:#000000;font-weight:normal;white-space:nowrap;-webkit-text-stroke:0.1px #000000;transform:scaleX(0.8326);transform-origin:right center;-webkit-text-stroke:0.25px #000">م/عبدالله</div>
</div>
<div style="position:absolute;left:262.00px;top:179.50px;width:95.00px;height:10.80px;overflow:hidden">
<div dir="rtl" style="position:absolute;right:1.00px;text-align:right;top:1.70px;font-size:6.40px;line-height:8.00px;color:#000000;font-weight:normal;white-space:nowrap;-webkit-text-stroke:0.1px #000000;transform:scaleX(1.0916);transform-origin:right center;-webkit-text-stroke:0.25px #000">سحب الجهاز للورشه المركزيه للتفحص</div>
</div>
<div style="position:absolute;left:262.00px;top:210.60px;width:95.00px;height:100.70px;overflow:hidden">
<div dir="rtl" style="position:absolute;right:1.20px;text-align:right;top:42.00px;font-size:6.40px;line-height:8.00px;color:#000000;font-weight:normal;white-space:nowrap;-webkit-text-stroke:0.1px #000000;transform:scaleX(1.0069);transform-origin:right center;-webkit-text-stroke:0.25px #000">يتم سحب الجهاز  لاقرب مركز محلي</div>
</div>
<div style="position:absolute;left:262.00px;top:210.60px;width:95.00px;height:100.70px;overflow:hidden">
<div dir="rtl" style="position:absolute;right:1.20px;text-align:right;top:51.90px;font-size:6.40px;line-height:8.00px;color:#000000;font-weight:normal;white-space:nowrap;-webkit-text-stroke:0.1px #000000;transform:scaleX(1.0353);transform-origin:right center;-webkit-text-stroke:0.25px #000">للإصلاح / الجهاز ضمان فاتوره</div>
</div>
<div style="position:absolute;left:262.00px;top:210.60px;width:95.00px;height:100.70px;overflow:hidden">
<div dir="rtl" style="position:absolute;right:1.20px;text-align:right;top:61.80px;font-size:6.40px;line-height:8.00px;color:#000000;font-weight:normal;white-space:nowrap;-webkit-text-stroke:0.1px #000000;transform:scaleX(0.9486);transform-origin:right center;-webkit-text-stroke:0.25px #000">درجة ثانية / السيريال المطبوع على</div>
</div>
<div style="position:absolute;left:262.00px;top:210.60px;width:95.00px;height:100.70px;overflow:hidden">
<div dir="rtl" style="position:absolute;right:1.20px;text-align:right;top:71.70px;font-size:6.40px;line-height:8.00px;color:#000000;font-weight:normal;white-space:nowrap;-webkit-text-stroke:0.1px #000000;transform:scaleX(0.9671);transform-origin:right center;-webkit-text-stroke:0.25px #000">ضهر الجهاز خاطئ بناء على إفاده</div>
</div>
<div style="position:absolute;left:262.00px;top:210.60px;width:95.00px;height:100.70px;overflow:hidden">
<div dir="rtl" style="position:absolute;right:1.20px;text-align:right;top:81.60px;font-size:6.40px;line-height:8.00px;color:#000000;font-weight:normal;white-space:nowrap;-webkit-text-stroke:0.1px #000000;transform:scaleX(0.9549);transform-origin:right center;-webkit-text-stroke:0.25px #000">المصنع بطباعته خطاء</div>
</div>
<div style="position:absolute;left:262.00px;top:210.60px;width:95.00px;height:100.70px;overflow:hidden">
<div dir="rtl" style="position:absolute;right:1.20px;text-align:right;top:91.50px;font-size:6.40px;line-height:8.00px;color:#000000;font-weight:normal;white-space:nowrap;-webkit-text-stroke:0.1px #000000;transform:scaleX(0.9445);transform-origin:right center;-webkit-text-stroke:0.25px #000">م/ عبدالرحمن كرم</div>
</div>
<div style="position:absolute;left:262.00px;top:331.40px;width:95.00px;height:30.90px;overflow:hidden">
<div dir="rtl" style="position:absolute;right:1.00px;text-align:right;top:2.70px;font-size:6.40px;line-height:8.00px;color:#000000;font-weight:normal;white-space:nowrap;-webkit-text-stroke:0.1px #000000;transform:scaleX(1.0323);transform-origin:right center;-webkit-text-stroke:0.25px #000">يتم سحب الجهاز للفحص و الاصلاح</div>
</div>
<div style="position:absolute;left:262.00px;top:331.40px;width:95.00px;height:30.90px;overflow:hidden">
<div dir="rtl" style="position:absolute;right:1.00px;text-align:right;top:12.80px;font-size:6.40px;line-height:8.00px;color:#000000;font-weight:normal;white-space:nowrap;-webkit-text-stroke:0.1px #000000;transform:scaleX(0.8211);transform-origin:right center;-webkit-text-stroke:0.25px #000">بالمصنع</div>
</div>
<div style="position:absolute;left:262.00px;top:331.40px;width:95.00px;height:30.90px;overflow:hidden">
<div dir="rtl" style="position:absolute;right:1.00px;text-align:right;top:22.70px;font-size:6.40px;line-height:8.00px;color:#000000;font-weight:normal;white-space:nowrap;-webkit-text-stroke:0.1px #000000;transform:scaleX(0.9270);transform-origin:right center;-webkit-text-stroke:0.25px #000">م مصطفى ايمن</div>
</div>
<div style="position:absolute;left:221.50px;top:372.00px;width:135.50px;height:10.10px;overflow:hidden">
<div dir="rtl" style="position:absolute;right:1.00px;text-align:right;top:1.30px;font-size:6.40px;line-height:8.00px;color:#000000;font-weight:normal;white-space:nowrap;-webkit-text-stroke:0.1px #000000;transform:scaleX(0.9792);transform-origin:right center;-webkit-text-stroke:0.25px #000">يتم السحب للإصلاح بالمصنع , ضمان طبقًا للسيريال.</div>
</div>
<svg style="position:absolute;left:712.60px;top:379.80px;overflow:visible" width="2.2" height="2.2" viewBox="0 0 2.2 2.2"><path d="M2.2 0 V2.2 H0Z" fill="#1f4e79"/></svg>
<div style="position:absolute;left:680.50px;top:381.70px;width:35.20px;height:11.20px;border:1.2px solid #107c41;box-sizing:border-box"></div>
<div style="position:absolute;left:714.20px;top:391.60px;width:2.20px;height:2.20px;background:#107c41;border:0.4px solid #fff"></div>
<div style="position:absolute;left:791.30px;top:129.00px;width:8.70px;height:288.00px;background:#f9f9f9"></div>
<svg style="position:absolute;left:794.50px;top:132.50px;overflow:visible" width="4" height="3" viewBox="0 0 4 3"><path d="M0 3 L2 0.3 L4 3Z" fill="#555"/></svg>
<div style="position:absolute;left:794.30px;top:138.50px;width:4.70px;height:217.20px;background:#616161;border-radius:2.4px"></div>
<svg style="position:absolute;left:794.80px;top:412.60px;overflow:visible" width="4" height="3" viewBox="0 0 4 3"><path d="M0 0 L2 2.7 L4 0Z" fill="#555"/></svg>
<div style="position:absolute;left:0.00px;top:417.50px;width:800.00px;height:16.10px;background:#e3e5ec"></div>
<svg style="position:absolute;left:5.70px;top:422.60px;overflow:visible" width="3.8" height="5.5" viewBox="0 0 3.8 5.5"><path d="M3.4 0.3 L0.6 2.75 L3.4 5.2" fill="none" stroke="#9a9a9a" stroke-width="0.6"/></svg>
<svg style="position:absolute;left:22.50px;top:422.60px;overflow:visible" width="3.8" height="5.5" viewBox="0 0 3.8 5.5"><path d="M0.4 0.3 L3.2 2.75 L0.4 5.2" fill="none" stroke="#9a9a9a" stroke-width="0.6"/></svg>
<div style="position:absolute;left:51.70px;top:417.50px;width:30.80px;height:16.10px;background:#ffffff"></div>
<div style="position:absolute;left:56.20px;top:419.50px;font-size:8.00px;line-height:10.00px;color:#1a1a1a;font-weight:bold;white-space:nowrap;-webkit-text-stroke:0.12px #1a1a1a;transform:scaleX(0.8577);transform-origin:left center;">Sheet2</div>
<div style="position:absolute;left:56.20px;top:429.80px;width:22.60px;height:1.00px;background:#107c41"></div>
<div style="position:absolute;left:84.00px;top:420.00px;width:0.60px;height:11.00px;background:#c8c8c8"></div>
<div style="position:absolute;left:120.50px;top:420.00px;width:0.60px;height:11.00px;background:#c8c8c8"></div>
<div style="position:absolute;left:156.50px;top:420.00px;width:0.60px;height:11.00px;background:#c8c8c8"></div>
<div style="position:absolute;left:191.70px;top:420.00px;width:0.60px;height:11.00px;background:#c8c8c8"></div>
<div style="position:absolute;left:91.75px;top:420.90px;font-size:8.00px;line-height:10.00px;color:#242424;font-weight:normal;white-space:nowrap;-webkit-text-stroke:0.12px #242424;transform:scaleX(0.8458);transform-origin:left center;">Sheet1</div>
<div style="position:absolute;left:127.20px;top:420.90px;font-size:8.00px;line-height:10.00px;color:#242424;font-weight:normal;white-space:nowrap;-webkit-text-stroke:0.12px #242424;transform:scaleX(0.8872);transform-origin:left center;">Sheet9</div>
<div style="position:absolute;left:163.70px;top:420.90px;font-size:8.00px;line-height:10.00px;color:#242424;font-weight:normal;white-space:nowrap;-webkit-text-stroke:0.12px #242424;transform:scaleX(0.8865);transform-origin:left center;">Export</div>
<svg style="position:absolute;left:213.40px;top:422.70px;overflow:visible" width="6" height="6" viewBox="0 0 6 6"><path d="M3 0 V6 M0 3 H6" stroke="#242424" stroke-width="0.7"/></svg>
<div style="position:absolute;left:479.30px;top:422.20px;width:1.10px;height:1.00px;background:#424242"></div>
<div style="position:absolute;left:479.30px;top:425.30px;width:1.10px;height:1.00px;background:#424242"></div>
<div style="position:absolute;left:479.30px;top:428.40px;width:1.10px;height:1.00px;background:#424242"></div>
<div style="position:absolute;left:488.50px;top:420.70px;width:302.50px;height:9.00px;background:#f5f5f5;border-radius:4.5px"></div>
<svg style="position:absolute;left:490.70px;top:423.40px;overflow:visible" width="4" height="4.2" viewBox="0 0 4 4.2"><path d="M4 0 V4.2 L0.3 2.1Z" fill="#424242"/></svg>
<div style="position:absolute;left:728.00px;top:423.20px;width:54.00px;height:4.60px;background:#616161;border-radius:2.3px"></div>
<svg style="position:absolute;left:786.40px;top:423.60px;overflow:visible" width="4" height="4.2" viewBox="0 0 4 4.2"><path d="M0 0 V4.2 L3.7 2.1Z" fill="#424242"/></svg>
<div style="position:absolute;left:0.00px;top:433.50px;width:800.00px;height:10.50px;background:#f4f4f4"></div>
<div style="position:absolute;left:-0.50px;top:436.51px;font-size:5.90px;line-height:7.38px;color:#424242;font-weight:normal;white-space:nowrap;-webkit-text-stroke:0.05px #424242;transform:scaleX(0.8220);transform-origin:left center;">Ready</div>
<svg style="position:absolute;left:24.70px;top:436.00px;overflow:visible" width="7" height="7" viewBox="0 0 7 7"><circle cx="3.5" cy="1.2" r="0.9" fill="none" stroke="#424242" stroke-width="0.6"/><path d="M0.5 2.6 H6.5 M3.5 2.6 V4.5 L2 6.8 M3.5 4.5 L5 6.8" fill="none" stroke="#424242" stroke-width="0.6"/></svg>
<div style="position:absolute;left:34.20px;top:436.57px;font-size:5.80px;line-height:7.25px;color:#242424;font-weight:bold;white-space:nowrap;-webkit-text-stroke:0.05px #242424;transform:scaleX(0.9166);transform-origin:left center;">Accessibility: Investigate</div>
<div style="position:absolute;left:645.00px;top:434.70px;width:21.00px;height:8.30px;background:#dedede"></div>
<svg style="position:absolute;left:651.00px;top:436.20px;overflow:visible" width="8" height="6" viewBox="0 0 8 6"><rect x="0.3" y="0.3" width="7.4" height="5.4" fill="none" stroke="#616161" stroke-width="0.6"/><path d="M0.3 2 H7.7 M2.8 0.3 V5.7 M5.2 0.3 V5.7" stroke="#616161" stroke-width="0.5"/></svg>
<svg style="position:absolute;left:672.00px;top:436.20px;overflow:visible" width="8.8" height="6.5" viewBox="0 0 8.8 6.5"><rect x="0.3" y="0.3" width="8.2" height="5.9" fill="none" stroke="#616161" stroke-width="0.6"/><rect x="2" y="1.5" width="4.8" height="3.5" fill="none" stroke="#616161" stroke-width="0.5"/></svg>
<svg style="position:absolute;left:693.50px;top:436.00px;overflow:visible" width="8.2" height="6.7" viewBox="0 0 8.2 6.7"><path d="M0.3 6.4 V0.3 H7.9 V6.4 M2.6 0.3 V4 M5.6 0.3 V4 M0.3 4 H7.9" fill="none" stroke="#616161" stroke-width="0.6"/></svg>
<div style="position:absolute;left:711.50px;top:439.90px;width:3.30px;height:0.60px;background:#8a8a8a"></div>
<div style="position:absolute;left:718.20px;top:439.90px;width:52.50px;height:0.50px;background:#8a8a8a"></div>
<div style="position:absolute;left:743.30px;top:436.60px;width:2.40px;height:6.40px;background:#424242"></div>
<svg style="position:absolute;left:773.70px;top:438.40px;overflow:visible" width="3.2" height="3.2" viewBox="0 0 3.2 3.2"><path d="M1.6 0 V3.2 M0 1.6 H3.2" stroke="#8a8a8a" stroke-width="0.6"/></svg>
<div style="position:absolute;left:784.20px;top:436.27px;font-size:6.60px;line-height:8.25px;color:#333333;font-weight:normal;white-space:nowrap;-webkit-text-stroke:0.05px #333333;transform:scaleX(0.7585);transform-origin:left center;">100%</div>
</div></body></html>
